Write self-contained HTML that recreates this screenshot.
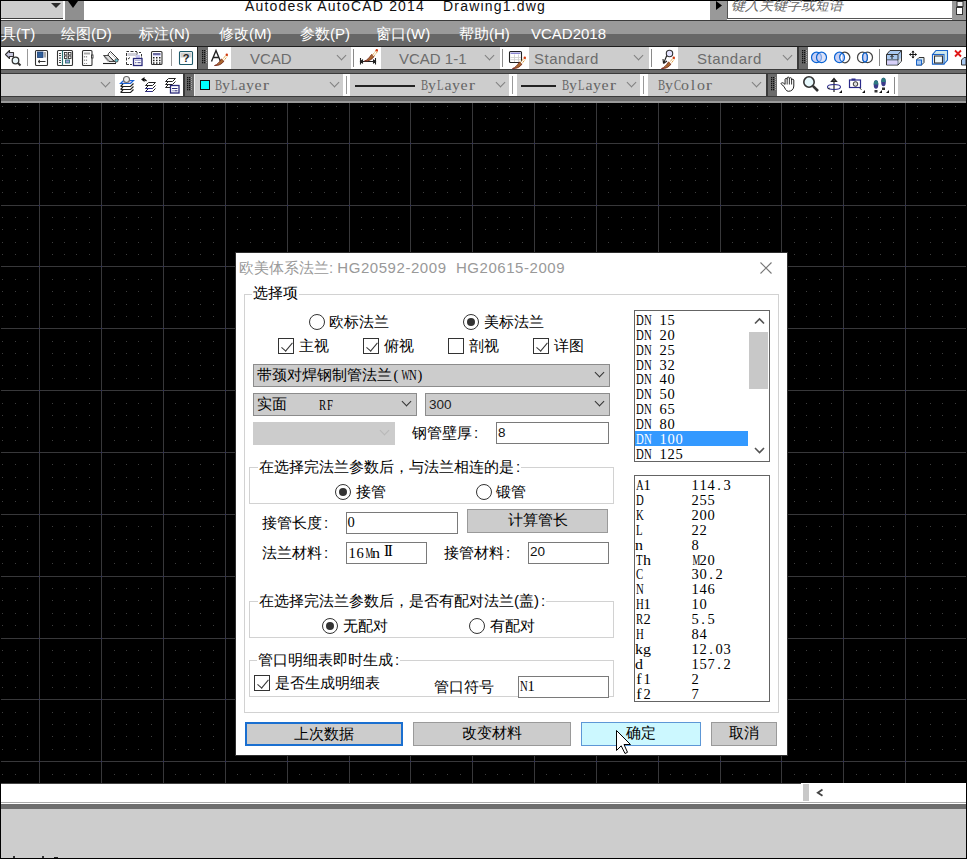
<!DOCTYPE html>
<html><head><meta charset="utf-8">
<style>
*{margin:0;padding:0;box-sizing:border-box}
html,body{width:967px;height:859px;overflow:hidden;background:#000}
body{position:relative;font-family:"Liberation Sans",sans-serif;font-size:15px;color:#000}
.a{position:absolute}
.t{position:absolute;white-space:nowrap;line-height:1}
.mono{font-family:"Liberation Mono",monospace}
.menu{color:#fff;font-size:15px;top:26px}
.cmb{position:absolute;background:#cdcdcd}
.cmbtxt{position:absolute;white-space:nowrap;color:#6c6c6c;font-size:15px;line-height:1}
.chev{position:absolute;width:7px;height:7px;border-right:1px solid #808080;border-bottom:1px solid #808080;transform:rotate(45deg)}
.wt{position:absolute;background:#fff}
.grip{position:absolute;background:#6b6b6b}
.grip i{display:none}
.sep{position:absolute;width:1px;background:#8a8a8a}
.bl{position:absolute;font-family:"Liberation Serif",serif;color:#666;font-size:14.5px;line-height:1;white-space:nowrap}
.c{display:inline-block;width:8px;text-align:center;font-weight:normal}
.w1{transform:scaleX(.74)}
.w2{transform:scaleX(.6)}
.w3{transform:scaleX(1.1)}
.w4{transform:scaleX(1.3)}
.ss{font-family:"Liberation Serif",serif;font-size:14.5px}
/* dialog */
.dlg{position:absolute;left:235px;top:253px;width:552px;height:502px;background:#fff;border-left:1px solid #555}
.grp{position:absolute;border:1px solid #d2d2d2}
.lbl{position:absolute;white-space:nowrap;line-height:1;background:#fff;padding:0 1px}
.radio{position:absolute;width:16px;height:16px;border:1px solid #333;border-radius:50%;background:#fff}
.radio.on::after{content:"";position:absolute;left:3px;top:3px;width:8px;height:8px;border-radius:50%;background:#333}
.chk{position:absolute;width:16px;height:16px;border:1px solid #333;background:#fff}
.chk.on::after{content:"";position:absolute;left:5px;top:1px;width:5px;height:10px;border-right:1.2px solid #333;border-bottom:1.2px solid #333;transform:rotate(40deg)}
.dcmb{position:absolute;background:#cccccc;border:1px solid #8c8c8c}
.tb{position:absolute;background:#fff;border:1px solid #7a7a7a}
.btn{position:absolute;background:#cccccc;border:1px solid #9a9a9a;text-align:center;line-height:20px}
.lst{position:absolute;border:1px solid #646464;background:#fff;overflow:hidden}
.li{position:absolute;left:0px;height:15px;font-family:"Liberation Serif",serif;font-size:14.5px;line-height:14px;white-space:nowrap}
</style></head><body>
<!-- title bar -->
<div class="a" style="left:1px;top:1px;width:965px;height:19px;background:#fff"></div>
<div class="a" style="left:1px;top:20px;width:965px;height:1px;background:#3a3a3a"></div>
<div class="a" style="left:1px;top:1px;width:63px;height:17px;background:#cdcdcd"></div>
<div class="a" style="left:1px;top:18px;width:63px;height:1px;background:#3c3c3c"></div>
<div class="a" style="left:63px;top:1px;width:1px;height:18px;background:#fff"></div>
<div class="a" style="left:65px;top:1px;width:19px;height:19px;background:#8f8f8f"></div>
<svg class="a" style="left:0;top:0" width="90" height="20"><path d="M51 3H61L56 8Z" fill="#2a2a2a"/><path d="M68 1H78L73 8Z" fill="#000"/></svg>
<div class="t" style="left:245px;top:-1px;font-size:14px;letter-spacing:1.2px;color:#111">Autodesk AutoCAD 2014</div><div class="t" style="left:443px;top:-1px;font-size:14px;letter-spacing:1.2px;color:#111">Drawing1.dwg</div>
<div class="a" style="left:710px;top:1px;width:17px;height:19px;background:#999"></div>
<svg class="a" style="left:700px;top:0" width="30" height="20"><path d="M16 1L22 5.5L16 10Z" fill="#000"/></svg>
<div class="a" style="left:727px;top:1px;width:225px;height:18px;background:#fff;border-left:1px solid #555;border-bottom:1px solid #555"></div>
<div class="t" style="left:731px;top:-2px;font-size:14px;color:#666;font-style:italic">键入关键字或短语</div>
<div class="a" style="left:952px;top:1px;width:14px;height:19px;background:#999"></div>
<svg class="a" style="left:950px;top:0" width="17" height="18"><rect x="7" y="1.5" width="6" height="5" fill="#eee" stroke="#333"/><rect x="6.5" y="7.5" width="6" height="7" fill="#fff" stroke="#333"/></svg>
<!-- menu bar -->
<div class="a" style="left:1px;top:21px;width:965px;height:13px;background:#9a9a9a"></div>
<div class="a" style="left:1px;top:34px;width:965px;height:12px;background:#676767"></div>
<div class="a" style="left:1px;top:46px;width:965px;height:1px;background:#1e1e1e"></div>
<div class="t menu" style="left:1px">具(T)</div>
<div class="t menu" style="left:61px">绘图(D)</div>
<div class="t menu" style="left:139px">标注(N)</div>
<div class="t menu" style="left:219px">修改(M)</div>
<div class="t menu" style="left:300px">参数(P)</div>
<div class="t menu" style="left:376px">窗口(W)</div>
<div class="t menu" style="left:459px">帮助(H)</div>
<div class="t menu" style="left:531px">VCAD2018</div>
<!-- toolbars background -->
<div class="a" style="left:1px;top:47px;width:965px;height:56px;background:#6b6b6b"></div>
<div class="a" style="left:1px;top:69px;width:965px;height:1px;background:#3a3a3a"></div>
<div class="a" style="left:1px;top:73px;width:965px;height:1px;background:#3a3a3a"></div>
<div class="a" style="left:1px;top:96px;width:965px;height:1px;background:#3a3a3a"></div>
<div class="a" style="left:1px;top:101px;width:965px;height:2px;background:#9a9a9a"></div>
<!-- row 1 -->
<div class="wt" style="left:1px;top:47px;width:196px;height:22px"></div>
<div class="grip" style="left:200px;top:47px;width:8px;height:22px"><i></i></div>
<div class="wt" style="left:208px;top:47px;width:589px;height:22px"></div>
<div class="cmb" style="left:231px;top:47px;width:120px;height:22px"></div>
<div class="cmbtxt" style="left:250px;top:51px">VCAD</div>
<div class="chev" style="left:337.5px;top:51.5px"></div>
<div class="sep" style="left:353px;top:49px;height:18px"></div>
<div class="cmb" style="left:381px;top:47px;width:119px;height:22px"></div>
<div class="cmbtxt" style="left:399px;top:51px">VCAD 1-1</div>
<div class="chev" style="left:485.5px;top:51.5px"></div>
<div class="sep" style="left:502px;top:49px;height:18px"></div>
<div class="cmb" style="left:529px;top:47px;width:120px;height:22px"></div>
<div class="cmbtxt" style="left:534px;top:51px;letter-spacing:0.5px">Standard</div>
<div class="chev" style="left:634.5px;top:51.5px"></div>
<div class="sep" style="left:651px;top:49px;height:18px"></div>
<div class="cmb" style="left:678px;top:47px;width:119px;height:22px"></div>
<div class="cmbtxt" style="left:697px;top:51px;letter-spacing:0.5px">Standard</div>
<div class="chev" style="left:783.5px;top:51.5px"></div>
<div class="grip" style="left:800px;top:47px;width:8px;height:22px"><i></i></div>
<div class="wt" style="left:808px;top:47px;width:158px;height:22px"></div>
<!-- row 2 -->
<div class="cmb" style="left:1px;top:74px;width:114px;height:22px"></div>
<div class="chev" style="left:101.5px;top:78.5px"></div>
<div class="wt" style="left:115px;top:74px;width:68px;height:22px"></div>
<div class="grip" style="left:186px;top:74px;width:8px;height:22px"><i></i></div>
<div class="cmb" style="left:194px;top:74px;width:149px;height:22px;border-left:1px solid #eee"></div>
<div class="a" style="left:200px;top:80px;width:10px;height:10px;background:#00ffff;border:1px solid #111"></div>
<div class="bl" style="left:214px;top:78px"><b class="c w1">B</b><b class="c w3">y</b><b class="c w1">L</b><b class="c w3">a</b><b class="c w3">y</b><b class="c w3">e</b><b class="c w4">r</b></div>
<div class="chev" style="left:330.5px;top:78.5px"></div>
<div class="a" style="left:343px;top:74px;width:7px;height:22px;background:#fff"></div>
<div class="a" style="left:346px;top:76px;width:1px;height:18px;background:#999"></div>
<div class="cmb" style="left:350px;top:74px;width:159px;height:22px"></div>
<div class="a" style="left:355px;top:85px;width:60px;height:2px;background:#222"></div>
<div class="bl" style="left:420px;top:78px"><b class="c w1">B</b><b class="c w3">y</b><b class="c w1">L</b><b class="c w3">a</b><b class="c w3">y</b><b class="c w3">e</b><b class="c w4">r</b></div>
<div class="chev" style="left:496.5px;top:78.5px"></div>
<div class="a" style="left:509px;top:74px;width:8px;height:22px;background:#fff"></div>
<div class="a" style="left:512px;top:76px;width:1px;height:18px;background:#999"></div>
<div class="cmb" style="left:517px;top:74px;width:123px;height:22px"></div>
<div class="a" style="left:521px;top:85px;width:35px;height:2px;background:#222"></div>
<div class="bl" style="left:561px;top:78px"><b class="c w1">B</b><b class="c w3">y</b><b class="c w1">L</b><b class="c w3">a</b><b class="c w3">y</b><b class="c w3">e</b><b class="c w4">r</b></div>
<div class="chev" style="left:627.5px;top:78.5px"></div>
<div class="a" style="left:640px;top:74px;width:8px;height:22px;background:#fff"></div>
<div class="a" style="left:643px;top:76px;width:1px;height:18px;background:#999"></div>
<div class="cmb" style="left:648px;top:74px;width:118px;height:22px"></div>
<div class="bl" style="left:657px;top:78px"><b class="c w1">B</b><b class="c w3">y</b><b class="c w1">C</b><b class="c w3">o</b><b class="c w3">l</b><b class="c w3">o</b><b class="c w4">r</b></div>
<div class="chev" style="left:752.5px;top:78.5px"></div>
<div class="grip" style="left:769px;top:74px;width:8px;height:22px"><i></i></div>
<div class="wt" style="left:777px;top:74px;width:121px;height:22px"></div>
<div class="sep" style="left:894px;top:77px;height:17px"></div>
<div class="cmb" style="left:898px;top:74px;width:68px;height:22px"></div>
<div class="a" style="left:0;top:0;width:967px;height:859px"><svg class="grid" width="967" height="859" style="position:absolute;left:0;top:0"><path d="M2 106.5h1M15 106.5h1M27 106.5h1M52 106.5h1M64 106.5h1M76 106.5h1M89 106.5h1M114 106.5h1M126 106.5h1M138 106.5h1M151 106.5h1M175 106.5h1M188 106.5h1M200 106.5h1M213 106.5h1M237 106.5h1M250 106.5h1M262 106.5h1M274 106.5h1M299 106.5h1M311 106.5h1M324 106.5h1M336 106.5h1M361 106.5h1M373 106.5h1M386 106.5h1M398 106.5h1M423 106.5h1M435 106.5h1M447 106.5h1M460 106.5h1M485 106.5h1M497 106.5h1M509 106.5h1M522 106.5h1M546 106.5h1M559 106.5h1M571 106.5h1M584 106.5h1M608 106.5h1M621 106.5h1M633 106.5h1M645 106.5h1M670 106.5h1M682 106.5h1M695 106.5h1M707 106.5h1M732 106.5h1M744 106.5h1M757 106.5h1M769 106.5h1M794 106.5h1M806 106.5h1M819 106.5h1M831 106.5h1M856 106.5h1M868 106.5h1M880 106.5h1M893 106.5h1M917 106.5h1M930 106.5h1M942 106.5h1M955 106.5h1M2 118.5h1M15 118.5h1M27 118.5h1M52 118.5h1M64 118.5h1M76 118.5h1M89 118.5h1M114 118.5h1M126 118.5h1M138 118.5h1M151 118.5h1M175 118.5h1M188 118.5h1M200 118.5h1M213 118.5h1M237 118.5h1M250 118.5h1M262 118.5h1M274 118.5h1M299 118.5h1M311 118.5h1M324 118.5h1M336 118.5h1M361 118.5h1M373 118.5h1M386 118.5h1M398 118.5h1M423 118.5h1M435 118.5h1M447 118.5h1M460 118.5h1M485 118.5h1M497 118.5h1M509 118.5h1M522 118.5h1M546 118.5h1M559 118.5h1M571 118.5h1M584 118.5h1M608 118.5h1M621 118.5h1M633 118.5h1M645 118.5h1M670 118.5h1M682 118.5h1M695 118.5h1M707 118.5h1M732 118.5h1M744 118.5h1M757 118.5h1M769 118.5h1M794 118.5h1M806 118.5h1M819 118.5h1M831 118.5h1M856 118.5h1M868 118.5h1M880 118.5h1M893 118.5h1M917 118.5h1M930 118.5h1M942 118.5h1M955 118.5h1M2 130.5h1M15 130.5h1M27 130.5h1M52 130.5h1M64 130.5h1M76 130.5h1M89 130.5h1M114 130.5h1M126 130.5h1M138 130.5h1M151 130.5h1M175 130.5h1M188 130.5h1M200 130.5h1M213 130.5h1M237 130.5h1M250 130.5h1M262 130.5h1M274 130.5h1M299 130.5h1M311 130.5h1M324 130.5h1M336 130.5h1M361 130.5h1M373 130.5h1M386 130.5h1M398 130.5h1M423 130.5h1M435 130.5h1M447 130.5h1M460 130.5h1M485 130.5h1M497 130.5h1M509 130.5h1M522 130.5h1M546 130.5h1M559 130.5h1M571 130.5h1M584 130.5h1M608 130.5h1M621 130.5h1M633 130.5h1M645 130.5h1M670 130.5h1M682 130.5h1M695 130.5h1M707 130.5h1M732 130.5h1M744 130.5h1M757 130.5h1M769 130.5h1M794 130.5h1M806 130.5h1M819 130.5h1M831 130.5h1M856 130.5h1M868 130.5h1M880 130.5h1M893 130.5h1M917 130.5h1M930 130.5h1M942 130.5h1M955 130.5h1M2 155.5h1M15 155.5h1M27 155.5h1M52 155.5h1M64 155.5h1M76 155.5h1M89 155.5h1M114 155.5h1M126 155.5h1M138 155.5h1M151 155.5h1M175 155.5h1M188 155.5h1M200 155.5h1M213 155.5h1M237 155.5h1M250 155.5h1M262 155.5h1M274 155.5h1M299 155.5h1M311 155.5h1M324 155.5h1M336 155.5h1M361 155.5h1M373 155.5h1M386 155.5h1M398 155.5h1M423 155.5h1M435 155.5h1M447 155.5h1M460 155.5h1M485 155.5h1M497 155.5h1M509 155.5h1M522 155.5h1M546 155.5h1M559 155.5h1M571 155.5h1M584 155.5h1M608 155.5h1M621 155.5h1M633 155.5h1M645 155.5h1M670 155.5h1M682 155.5h1M695 155.5h1M707 155.5h1M732 155.5h1M744 155.5h1M757 155.5h1M769 155.5h1M794 155.5h1M806 155.5h1M819 155.5h1M831 155.5h1M856 155.5h1M868 155.5h1M880 155.5h1M893 155.5h1M917 155.5h1M930 155.5h1M942 155.5h1M955 155.5h1M2 168.5h1M15 168.5h1M27 168.5h1M52 168.5h1M64 168.5h1M76 168.5h1M89 168.5h1M114 168.5h1M126 168.5h1M138 168.5h1M151 168.5h1M175 168.5h1M188 168.5h1M200 168.5h1M213 168.5h1M237 168.5h1M250 168.5h1M262 168.5h1M274 168.5h1M299 168.5h1M311 168.5h1M324 168.5h1M336 168.5h1M361 168.5h1M373 168.5h1M386 168.5h1M398 168.5h1M423 168.5h1M435 168.5h1M447 168.5h1M460 168.5h1M485 168.5h1M497 168.5h1M509 168.5h1M522 168.5h1M546 168.5h1M559 168.5h1M571 168.5h1M584 168.5h1M608 168.5h1M621 168.5h1M633 168.5h1M645 168.5h1M670 168.5h1M682 168.5h1M695 168.5h1M707 168.5h1M732 168.5h1M744 168.5h1M757 168.5h1M769 168.5h1M794 168.5h1M806 168.5h1M819 168.5h1M831 168.5h1M856 168.5h1M868 168.5h1M880 168.5h1M893 168.5h1M917 168.5h1M930 168.5h1M942 168.5h1M955 168.5h1M2 180.5h1M15 180.5h1M27 180.5h1M52 180.5h1M64 180.5h1M76 180.5h1M89 180.5h1M114 180.5h1M126 180.5h1M138 180.5h1M151 180.5h1M175 180.5h1M188 180.5h1M200 180.5h1M213 180.5h1M237 180.5h1M250 180.5h1M262 180.5h1M274 180.5h1M299 180.5h1M311 180.5h1M324 180.5h1M336 180.5h1M361 180.5h1M373 180.5h1M386 180.5h1M398 180.5h1M423 180.5h1M435 180.5h1M447 180.5h1M460 180.5h1M485 180.5h1M497 180.5h1M509 180.5h1M522 180.5h1M546 180.5h1M559 180.5h1M571 180.5h1M584 180.5h1M608 180.5h1M621 180.5h1M633 180.5h1M645 180.5h1M670 180.5h1M682 180.5h1M695 180.5h1M707 180.5h1M732 180.5h1M744 180.5h1M757 180.5h1M769 180.5h1M794 180.5h1M806 180.5h1M819 180.5h1M831 180.5h1M856 180.5h1M868 180.5h1M880 180.5h1M893 180.5h1M917 180.5h1M930 180.5h1M942 180.5h1M955 180.5h1M2 192.5h1M15 192.5h1M27 192.5h1M52 192.5h1M64 192.5h1M76 192.5h1M89 192.5h1M114 192.5h1M126 192.5h1M138 192.5h1M151 192.5h1M175 192.5h1M188 192.5h1M200 192.5h1M213 192.5h1M237 192.5h1M250 192.5h1M262 192.5h1M274 192.5h1M299 192.5h1M311 192.5h1M324 192.5h1M336 192.5h1M361 192.5h1M373 192.5h1M386 192.5h1M398 192.5h1M423 192.5h1M435 192.5h1M447 192.5h1M460 192.5h1M485 192.5h1M497 192.5h1M509 192.5h1M522 192.5h1M546 192.5h1M559 192.5h1M571 192.5h1M584 192.5h1M608 192.5h1M621 192.5h1M633 192.5h1M645 192.5h1M670 192.5h1M682 192.5h1M695 192.5h1M707 192.5h1M732 192.5h1M744 192.5h1M757 192.5h1M769 192.5h1M794 192.5h1M806 192.5h1M819 192.5h1M831 192.5h1M856 192.5h1M868 192.5h1M880 192.5h1M893 192.5h1M917 192.5h1M930 192.5h1M942 192.5h1M955 192.5h1M2 217.5h1M15 217.5h1M27 217.5h1M52 217.5h1M64 217.5h1M76 217.5h1M89 217.5h1M114 217.5h1M126 217.5h1M138 217.5h1M151 217.5h1M175 217.5h1M188 217.5h1M200 217.5h1M213 217.5h1M237 217.5h1M250 217.5h1M262 217.5h1M274 217.5h1M299 217.5h1M311 217.5h1M324 217.5h1M336 217.5h1M361 217.5h1M373 217.5h1M386 217.5h1M398 217.5h1M423 217.5h1M435 217.5h1M447 217.5h1M460 217.5h1M485 217.5h1M497 217.5h1M509 217.5h1M522 217.5h1M546 217.5h1M559 217.5h1M571 217.5h1M584 217.5h1M608 217.5h1M621 217.5h1M633 217.5h1M645 217.5h1M670 217.5h1M682 217.5h1M695 217.5h1M707 217.5h1M732 217.5h1M744 217.5h1M757 217.5h1M769 217.5h1M794 217.5h1M806 217.5h1M819 217.5h1M831 217.5h1M856 217.5h1M868 217.5h1M880 217.5h1M893 217.5h1M917 217.5h1M930 217.5h1M942 217.5h1M955 217.5h1M2 229.5h1M15 229.5h1M27 229.5h1M52 229.5h1M64 229.5h1M76 229.5h1M89 229.5h1M114 229.5h1M126 229.5h1M138 229.5h1M151 229.5h1M175 229.5h1M188 229.5h1M200 229.5h1M213 229.5h1M237 229.5h1M250 229.5h1M262 229.5h1M274 229.5h1M299 229.5h1M311 229.5h1M324 229.5h1M336 229.5h1M361 229.5h1M373 229.5h1M386 229.5h1M398 229.5h1M423 229.5h1M435 229.5h1M447 229.5h1M460 229.5h1M485 229.5h1M497 229.5h1M509 229.5h1M522 229.5h1M546 229.5h1M559 229.5h1M571 229.5h1M584 229.5h1M608 229.5h1M621 229.5h1M633 229.5h1M645 229.5h1M670 229.5h1M682 229.5h1M695 229.5h1M707 229.5h1M732 229.5h1M744 229.5h1M757 229.5h1M769 229.5h1M794 229.5h1M806 229.5h1M819 229.5h1M831 229.5h1M856 229.5h1M868 229.5h1M880 229.5h1M893 229.5h1M917 229.5h1M930 229.5h1M942 229.5h1M955 229.5h1M2 242.5h1M15 242.5h1M27 242.5h1M52 242.5h1M64 242.5h1M76 242.5h1M89 242.5h1M114 242.5h1M126 242.5h1M138 242.5h1M151 242.5h1M175 242.5h1M188 242.5h1M200 242.5h1M213 242.5h1M237 242.5h1M250 242.5h1M262 242.5h1M274 242.5h1M299 242.5h1M311 242.5h1M324 242.5h1M336 242.5h1M361 242.5h1M373 242.5h1M386 242.5h1M398 242.5h1M423 242.5h1M435 242.5h1M447 242.5h1M460 242.5h1M485 242.5h1M497 242.5h1M509 242.5h1M522 242.5h1M546 242.5h1M559 242.5h1M571 242.5h1M584 242.5h1M608 242.5h1M621 242.5h1M633 242.5h1M645 242.5h1M670 242.5h1M682 242.5h1M695 242.5h1M707 242.5h1M732 242.5h1M744 242.5h1M757 242.5h1M769 242.5h1M794 242.5h1M806 242.5h1M819 242.5h1M831 242.5h1M856 242.5h1M868 242.5h1M880 242.5h1M893 242.5h1M917 242.5h1M930 242.5h1M942 242.5h1M955 242.5h1M2 254.5h1M15 254.5h1M27 254.5h1M52 254.5h1M64 254.5h1M76 254.5h1M89 254.5h1M114 254.5h1M126 254.5h1M138 254.5h1M151 254.5h1M175 254.5h1M188 254.5h1M200 254.5h1M213 254.5h1M237 254.5h1M250 254.5h1M262 254.5h1M274 254.5h1M299 254.5h1M311 254.5h1M324 254.5h1M336 254.5h1M361 254.5h1M373 254.5h1M386 254.5h1M398 254.5h1M423 254.5h1M435 254.5h1M447 254.5h1M460 254.5h1M485 254.5h1M497 254.5h1M509 254.5h1M522 254.5h1M546 254.5h1M559 254.5h1M571 254.5h1M584 254.5h1M608 254.5h1M621 254.5h1M633 254.5h1M645 254.5h1M670 254.5h1M682 254.5h1M695 254.5h1M707 254.5h1M732 254.5h1M744 254.5h1M757 254.5h1M769 254.5h1M794 254.5h1M806 254.5h1M819 254.5h1M831 254.5h1M856 254.5h1M868 254.5h1M880 254.5h1M893 254.5h1M917 254.5h1M930 254.5h1M942 254.5h1M955 254.5h1M2 279.5h1M15 279.5h1M27 279.5h1M52 279.5h1M64 279.5h1M76 279.5h1M89 279.5h1M114 279.5h1M126 279.5h1M138 279.5h1M151 279.5h1M175 279.5h1M188 279.5h1M200 279.5h1M213 279.5h1M237 279.5h1M250 279.5h1M262 279.5h1M274 279.5h1M299 279.5h1M311 279.5h1M324 279.5h1M336 279.5h1M361 279.5h1M373 279.5h1M386 279.5h1M398 279.5h1M423 279.5h1M435 279.5h1M447 279.5h1M460 279.5h1M485 279.5h1M497 279.5h1M509 279.5h1M522 279.5h1M546 279.5h1M559 279.5h1M571 279.5h1M584 279.5h1M608 279.5h1M621 279.5h1M633 279.5h1M645 279.5h1M670 279.5h1M682 279.5h1M695 279.5h1M707 279.5h1M732 279.5h1M744 279.5h1M757 279.5h1M769 279.5h1M794 279.5h1M806 279.5h1M819 279.5h1M831 279.5h1M856 279.5h1M868 279.5h1M880 279.5h1M893 279.5h1M917 279.5h1M930 279.5h1M942 279.5h1M955 279.5h1M2 291.5h1M15 291.5h1M27 291.5h1M52 291.5h1M64 291.5h1M76 291.5h1M89 291.5h1M114 291.5h1M126 291.5h1M138 291.5h1M151 291.5h1M175 291.5h1M188 291.5h1M200 291.5h1M213 291.5h1M237 291.5h1M250 291.5h1M262 291.5h1M274 291.5h1M299 291.5h1M311 291.5h1M324 291.5h1M336 291.5h1M361 291.5h1M373 291.5h1M386 291.5h1M398 291.5h1M423 291.5h1M435 291.5h1M447 291.5h1M460 291.5h1M485 291.5h1M497 291.5h1M509 291.5h1M522 291.5h1M546 291.5h1M559 291.5h1M571 291.5h1M584 291.5h1M608 291.5h1M621 291.5h1M633 291.5h1M645 291.5h1M670 291.5h1M682 291.5h1M695 291.5h1M707 291.5h1M732 291.5h1M744 291.5h1M757 291.5h1M769 291.5h1M794 291.5h1M806 291.5h1M819 291.5h1M831 291.5h1M856 291.5h1M868 291.5h1M880 291.5h1M893 291.5h1M917 291.5h1M930 291.5h1M942 291.5h1M955 291.5h1M2 304.5h1M15 304.5h1M27 304.5h1M52 304.5h1M64 304.5h1M76 304.5h1M89 304.5h1M114 304.5h1M126 304.5h1M138 304.5h1M151 304.5h1M175 304.5h1M188 304.5h1M200 304.5h1M213 304.5h1M237 304.5h1M250 304.5h1M262 304.5h1M274 304.5h1M299 304.5h1M311 304.5h1M324 304.5h1M336 304.5h1M361 304.5h1M373 304.5h1M386 304.5h1M398 304.5h1M423 304.5h1M435 304.5h1M447 304.5h1M460 304.5h1M485 304.5h1M497 304.5h1M509 304.5h1M522 304.5h1M546 304.5h1M559 304.5h1M571 304.5h1M584 304.5h1M608 304.5h1M621 304.5h1M633 304.5h1M645 304.5h1M670 304.5h1M682 304.5h1M695 304.5h1M707 304.5h1M732 304.5h1M744 304.5h1M757 304.5h1M769 304.5h1M794 304.5h1M806 304.5h1M819 304.5h1M831 304.5h1M856 304.5h1M868 304.5h1M880 304.5h1M893 304.5h1M917 304.5h1M930 304.5h1M942 304.5h1M955 304.5h1M2 316.5h1M15 316.5h1M27 316.5h1M52 316.5h1M64 316.5h1M76 316.5h1M89 316.5h1M114 316.5h1M126 316.5h1M138 316.5h1M151 316.5h1M175 316.5h1M188 316.5h1M200 316.5h1M213 316.5h1M237 316.5h1M250 316.5h1M262 316.5h1M274 316.5h1M299 316.5h1M311 316.5h1M324 316.5h1M336 316.5h1M361 316.5h1M373 316.5h1M386 316.5h1M398 316.5h1M423 316.5h1M435 316.5h1M447 316.5h1M460 316.5h1M485 316.5h1M497 316.5h1M509 316.5h1M522 316.5h1M546 316.5h1M559 316.5h1M571 316.5h1M584 316.5h1M608 316.5h1M621 316.5h1M633 316.5h1M645 316.5h1M670 316.5h1M682 316.5h1M695 316.5h1M707 316.5h1M732 316.5h1M744 316.5h1M757 316.5h1M769 316.5h1M794 316.5h1M806 316.5h1M819 316.5h1M831 316.5h1M856 316.5h1M868 316.5h1M880 316.5h1M893 316.5h1M917 316.5h1M930 316.5h1M942 316.5h1M955 316.5h1M2 341.5h1M15 341.5h1M27 341.5h1M52 341.5h1M64 341.5h1M76 341.5h1M89 341.5h1M114 341.5h1M126 341.5h1M138 341.5h1M151 341.5h1M175 341.5h1M188 341.5h1M200 341.5h1M213 341.5h1M237 341.5h1M250 341.5h1M262 341.5h1M274 341.5h1M299 341.5h1M311 341.5h1M324 341.5h1M336 341.5h1M361 341.5h1M373 341.5h1M386 341.5h1M398 341.5h1M423 341.5h1M435 341.5h1M447 341.5h1M460 341.5h1M485 341.5h1M497 341.5h1M509 341.5h1M522 341.5h1M546 341.5h1M559 341.5h1M571 341.5h1M584 341.5h1M608 341.5h1M621 341.5h1M633 341.5h1M645 341.5h1M670 341.5h1M682 341.5h1M695 341.5h1M707 341.5h1M732 341.5h1M744 341.5h1M757 341.5h1M769 341.5h1M794 341.5h1M806 341.5h1M819 341.5h1M831 341.5h1M856 341.5h1M868 341.5h1M880 341.5h1M893 341.5h1M917 341.5h1M930 341.5h1M942 341.5h1M955 341.5h1M2 353.5h1M15 353.5h1M27 353.5h1M52 353.5h1M64 353.5h1M76 353.5h1M89 353.5h1M114 353.5h1M126 353.5h1M138 353.5h1M151 353.5h1M175 353.5h1M188 353.5h1M200 353.5h1M213 353.5h1M237 353.5h1M250 353.5h1M262 353.5h1M274 353.5h1M299 353.5h1M311 353.5h1M324 353.5h1M336 353.5h1M361 353.5h1M373 353.5h1M386 353.5h1M398 353.5h1M423 353.5h1M435 353.5h1M447 353.5h1M460 353.5h1M485 353.5h1M497 353.5h1M509 353.5h1M522 353.5h1M546 353.5h1M559 353.5h1M571 353.5h1M584 353.5h1M608 353.5h1M621 353.5h1M633 353.5h1M645 353.5h1M670 353.5h1M682 353.5h1M695 353.5h1M707 353.5h1M732 353.5h1M744 353.5h1M757 353.5h1M769 353.5h1M794 353.5h1M806 353.5h1M819 353.5h1M831 353.5h1M856 353.5h1M868 353.5h1M880 353.5h1M893 353.5h1M917 353.5h1M930 353.5h1M942 353.5h1M955 353.5h1M2 365.5h1M15 365.5h1M27 365.5h1M52 365.5h1M64 365.5h1M76 365.5h1M89 365.5h1M114 365.5h1M126 365.5h1M138 365.5h1M151 365.5h1M175 365.5h1M188 365.5h1M200 365.5h1M213 365.5h1M237 365.5h1M250 365.5h1M262 365.5h1M274 365.5h1M299 365.5h1M311 365.5h1M324 365.5h1M336 365.5h1M361 365.5h1M373 365.5h1M386 365.5h1M398 365.5h1M423 365.5h1M435 365.5h1M447 365.5h1M460 365.5h1M485 365.5h1M497 365.5h1M509 365.5h1M522 365.5h1M546 365.5h1M559 365.5h1M571 365.5h1M584 365.5h1M608 365.5h1M621 365.5h1M633 365.5h1M645 365.5h1M670 365.5h1M682 365.5h1M695 365.5h1M707 365.5h1M732 365.5h1M744 365.5h1M757 365.5h1M769 365.5h1M794 365.5h1M806 365.5h1M819 365.5h1M831 365.5h1M856 365.5h1M868 365.5h1M880 365.5h1M893 365.5h1M917 365.5h1M930 365.5h1M942 365.5h1M955 365.5h1M2 378.5h1M15 378.5h1M27 378.5h1M52 378.5h1M64 378.5h1M76 378.5h1M89 378.5h1M114 378.5h1M126 378.5h1M138 378.5h1M151 378.5h1M175 378.5h1M188 378.5h1M200 378.5h1M213 378.5h1M237 378.5h1M250 378.5h1M262 378.5h1M274 378.5h1M299 378.5h1M311 378.5h1M324 378.5h1M336 378.5h1M361 378.5h1M373 378.5h1M386 378.5h1M398 378.5h1M423 378.5h1M435 378.5h1M447 378.5h1M460 378.5h1M485 378.5h1M497 378.5h1M509 378.5h1M522 378.5h1M546 378.5h1M559 378.5h1M571 378.5h1M584 378.5h1M608 378.5h1M621 378.5h1M633 378.5h1M645 378.5h1M670 378.5h1M682 378.5h1M695 378.5h1M707 378.5h1M732 378.5h1M744 378.5h1M757 378.5h1M769 378.5h1M794 378.5h1M806 378.5h1M819 378.5h1M831 378.5h1M856 378.5h1M868 378.5h1M880 378.5h1M893 378.5h1M917 378.5h1M930 378.5h1M942 378.5h1M955 378.5h1M2 403.5h1M15 403.5h1M27 403.5h1M52 403.5h1M64 403.5h1M76 403.5h1M89 403.5h1M114 403.5h1M126 403.5h1M138 403.5h1M151 403.5h1M175 403.5h1M188 403.5h1M200 403.5h1M213 403.5h1M237 403.5h1M250 403.5h1M262 403.5h1M274 403.5h1M299 403.5h1M311 403.5h1M324 403.5h1M336 403.5h1M361 403.5h1M373 403.5h1M386 403.5h1M398 403.5h1M423 403.5h1M435 403.5h1M447 403.5h1M460 403.5h1M485 403.5h1M497 403.5h1M509 403.5h1M522 403.5h1M546 403.5h1M559 403.5h1M571 403.5h1M584 403.5h1M608 403.5h1M621 403.5h1M633 403.5h1M645 403.5h1M670 403.5h1M682 403.5h1M695 403.5h1M707 403.5h1M732 403.5h1M744 403.5h1M757 403.5h1M769 403.5h1M794 403.5h1M806 403.5h1M819 403.5h1M831 403.5h1M856 403.5h1M868 403.5h1M880 403.5h1M893 403.5h1M917 403.5h1M930 403.5h1M942 403.5h1M955 403.5h1M2 415.5h1M15 415.5h1M27 415.5h1M52 415.5h1M64 415.5h1M76 415.5h1M89 415.5h1M114 415.5h1M126 415.5h1M138 415.5h1M151 415.5h1M175 415.5h1M188 415.5h1M200 415.5h1M213 415.5h1M237 415.5h1M250 415.5h1M262 415.5h1M274 415.5h1M299 415.5h1M311 415.5h1M324 415.5h1M336 415.5h1M361 415.5h1M373 415.5h1M386 415.5h1M398 415.5h1M423 415.5h1M435 415.5h1M447 415.5h1M460 415.5h1M485 415.5h1M497 415.5h1M509 415.5h1M522 415.5h1M546 415.5h1M559 415.5h1M571 415.5h1M584 415.5h1M608 415.5h1M621 415.5h1M633 415.5h1M645 415.5h1M670 415.5h1M682 415.5h1M695 415.5h1M707 415.5h1M732 415.5h1M744 415.5h1M757 415.5h1M769 415.5h1M794 415.5h1M806 415.5h1M819 415.5h1M831 415.5h1M856 415.5h1M868 415.5h1M880 415.5h1M893 415.5h1M917 415.5h1M930 415.5h1M942 415.5h1M955 415.5h1M2 427.5h1M15 427.5h1M27 427.5h1M52 427.5h1M64 427.5h1M76 427.5h1M89 427.5h1M114 427.5h1M126 427.5h1M138 427.5h1M151 427.5h1M175 427.5h1M188 427.5h1M200 427.5h1M213 427.5h1M237 427.5h1M250 427.5h1M262 427.5h1M274 427.5h1M299 427.5h1M311 427.5h1M324 427.5h1M336 427.5h1M361 427.5h1M373 427.5h1M386 427.5h1M398 427.5h1M423 427.5h1M435 427.5h1M447 427.5h1M460 427.5h1M485 427.5h1M497 427.5h1M509 427.5h1M522 427.5h1M546 427.5h1M559 427.5h1M571 427.5h1M584 427.5h1M608 427.5h1M621 427.5h1M633 427.5h1M645 427.5h1M670 427.5h1M682 427.5h1M695 427.5h1M707 427.5h1M732 427.5h1M744 427.5h1M757 427.5h1M769 427.5h1M794 427.5h1M806 427.5h1M819 427.5h1M831 427.5h1M856 427.5h1M868 427.5h1M880 427.5h1M893 427.5h1M917 427.5h1M930 427.5h1M942 427.5h1M955 427.5h1M2 440.5h1M15 440.5h1M27 440.5h1M52 440.5h1M64 440.5h1M76 440.5h1M89 440.5h1M114 440.5h1M126 440.5h1M138 440.5h1M151 440.5h1M175 440.5h1M188 440.5h1M200 440.5h1M213 440.5h1M237 440.5h1M250 440.5h1M262 440.5h1M274 440.5h1M299 440.5h1M311 440.5h1M324 440.5h1M336 440.5h1M361 440.5h1M373 440.5h1M386 440.5h1M398 440.5h1M423 440.5h1M435 440.5h1M447 440.5h1M460 440.5h1M485 440.5h1M497 440.5h1M509 440.5h1M522 440.5h1M546 440.5h1M559 440.5h1M571 440.5h1M584 440.5h1M608 440.5h1M621 440.5h1M633 440.5h1M645 440.5h1M670 440.5h1M682 440.5h1M695 440.5h1M707 440.5h1M732 440.5h1M744 440.5h1M757 440.5h1M769 440.5h1M794 440.5h1M806 440.5h1M819 440.5h1M831 440.5h1M856 440.5h1M868 440.5h1M880 440.5h1M893 440.5h1M917 440.5h1M930 440.5h1M942 440.5h1M955 440.5h1M2 464.5h1M15 464.5h1M27 464.5h1M52 464.5h1M64 464.5h1M76 464.5h1M89 464.5h1M114 464.5h1M126 464.5h1M138 464.5h1M151 464.5h1M175 464.5h1M188 464.5h1M200 464.5h1M213 464.5h1M237 464.5h1M250 464.5h1M262 464.5h1M274 464.5h1M299 464.5h1M311 464.5h1M324 464.5h1M336 464.5h1M361 464.5h1M373 464.5h1M386 464.5h1M398 464.5h1M423 464.5h1M435 464.5h1M447 464.5h1M460 464.5h1M485 464.5h1M497 464.5h1M509 464.5h1M522 464.5h1M546 464.5h1M559 464.5h1M571 464.5h1M584 464.5h1M608 464.5h1M621 464.5h1M633 464.5h1M645 464.5h1M670 464.5h1M682 464.5h1M695 464.5h1M707 464.5h1M732 464.5h1M744 464.5h1M757 464.5h1M769 464.5h1M794 464.5h1M806 464.5h1M819 464.5h1M831 464.5h1M856 464.5h1M868 464.5h1M880 464.5h1M893 464.5h1M917 464.5h1M930 464.5h1M942 464.5h1M955 464.5h1M2 477.5h1M15 477.5h1M27 477.5h1M52 477.5h1M64 477.5h1M76 477.5h1M89 477.5h1M114 477.5h1M126 477.5h1M138 477.5h1M151 477.5h1M175 477.5h1M188 477.5h1M200 477.5h1M213 477.5h1M237 477.5h1M250 477.5h1M262 477.5h1M274 477.5h1M299 477.5h1M311 477.5h1M324 477.5h1M336 477.5h1M361 477.5h1M373 477.5h1M386 477.5h1M398 477.5h1M423 477.5h1M435 477.5h1M447 477.5h1M460 477.5h1M485 477.5h1M497 477.5h1M509 477.5h1M522 477.5h1M546 477.5h1M559 477.5h1M571 477.5h1M584 477.5h1M608 477.5h1M621 477.5h1M633 477.5h1M645 477.5h1M670 477.5h1M682 477.5h1M695 477.5h1M707 477.5h1M732 477.5h1M744 477.5h1M757 477.5h1M769 477.5h1M794 477.5h1M806 477.5h1M819 477.5h1M831 477.5h1M856 477.5h1M868 477.5h1M880 477.5h1M893 477.5h1M917 477.5h1M930 477.5h1M942 477.5h1M955 477.5h1M2 489.5h1M15 489.5h1M27 489.5h1M52 489.5h1M64 489.5h1M76 489.5h1M89 489.5h1M114 489.5h1M126 489.5h1M138 489.5h1M151 489.5h1M175 489.5h1M188 489.5h1M200 489.5h1M213 489.5h1M237 489.5h1M250 489.5h1M262 489.5h1M274 489.5h1M299 489.5h1M311 489.5h1M324 489.5h1M336 489.5h1M361 489.5h1M373 489.5h1M386 489.5h1M398 489.5h1M423 489.5h1M435 489.5h1M447 489.5h1M460 489.5h1M485 489.5h1M497 489.5h1M509 489.5h1M522 489.5h1M546 489.5h1M559 489.5h1M571 489.5h1M584 489.5h1M608 489.5h1M621 489.5h1M633 489.5h1M645 489.5h1M670 489.5h1M682 489.5h1M695 489.5h1M707 489.5h1M732 489.5h1M744 489.5h1M757 489.5h1M769 489.5h1M794 489.5h1M806 489.5h1M819 489.5h1M831 489.5h1M856 489.5h1M868 489.5h1M880 489.5h1M893 489.5h1M917 489.5h1M930 489.5h1M942 489.5h1M955 489.5h1M2 501.5h1M15 501.5h1M27 501.5h1M52 501.5h1M64 501.5h1M76 501.5h1M89 501.5h1M114 501.5h1M126 501.5h1M138 501.5h1M151 501.5h1M175 501.5h1M188 501.5h1M200 501.5h1M213 501.5h1M237 501.5h1M250 501.5h1M262 501.5h1M274 501.5h1M299 501.5h1M311 501.5h1M324 501.5h1M336 501.5h1M361 501.5h1M373 501.5h1M386 501.5h1M398 501.5h1M423 501.5h1M435 501.5h1M447 501.5h1M460 501.5h1M485 501.5h1M497 501.5h1M509 501.5h1M522 501.5h1M546 501.5h1M559 501.5h1M571 501.5h1M584 501.5h1M608 501.5h1M621 501.5h1M633 501.5h1M645 501.5h1M670 501.5h1M682 501.5h1M695 501.5h1M707 501.5h1M732 501.5h1M744 501.5h1M757 501.5h1M769 501.5h1M794 501.5h1M806 501.5h1M819 501.5h1M831 501.5h1M856 501.5h1M868 501.5h1M880 501.5h1M893 501.5h1M917 501.5h1M930 501.5h1M942 501.5h1M955 501.5h1M2 526.5h1M15 526.5h1M27 526.5h1M52 526.5h1M64 526.5h1M76 526.5h1M89 526.5h1M114 526.5h1M126 526.5h1M138 526.5h1M151 526.5h1M175 526.5h1M188 526.5h1M200 526.5h1M213 526.5h1M237 526.5h1M250 526.5h1M262 526.5h1M274 526.5h1M299 526.5h1M311 526.5h1M324 526.5h1M336 526.5h1M361 526.5h1M373 526.5h1M386 526.5h1M398 526.5h1M423 526.5h1M435 526.5h1M447 526.5h1M460 526.5h1M485 526.5h1M497 526.5h1M509 526.5h1M522 526.5h1M546 526.5h1M559 526.5h1M571 526.5h1M584 526.5h1M608 526.5h1M621 526.5h1M633 526.5h1M645 526.5h1M670 526.5h1M682 526.5h1M695 526.5h1M707 526.5h1M732 526.5h1M744 526.5h1M757 526.5h1M769 526.5h1M794 526.5h1M806 526.5h1M819 526.5h1M831 526.5h1M856 526.5h1M868 526.5h1M880 526.5h1M893 526.5h1M917 526.5h1M930 526.5h1M942 526.5h1M955 526.5h1M2 539.5h1M15 539.5h1M27 539.5h1M52 539.5h1M64 539.5h1M76 539.5h1M89 539.5h1M114 539.5h1M126 539.5h1M138 539.5h1M151 539.5h1M175 539.5h1M188 539.5h1M200 539.5h1M213 539.5h1M237 539.5h1M250 539.5h1M262 539.5h1M274 539.5h1M299 539.5h1M311 539.5h1M324 539.5h1M336 539.5h1M361 539.5h1M373 539.5h1M386 539.5h1M398 539.5h1M423 539.5h1M435 539.5h1M447 539.5h1M460 539.5h1M485 539.5h1M497 539.5h1M509 539.5h1M522 539.5h1M546 539.5h1M559 539.5h1M571 539.5h1M584 539.5h1M608 539.5h1M621 539.5h1M633 539.5h1M645 539.5h1M670 539.5h1M682 539.5h1M695 539.5h1M707 539.5h1M732 539.5h1M744 539.5h1M757 539.5h1M769 539.5h1M794 539.5h1M806 539.5h1M819 539.5h1M831 539.5h1M856 539.5h1M868 539.5h1M880 539.5h1M893 539.5h1M917 539.5h1M930 539.5h1M942 539.5h1M955 539.5h1M2 551.5h1M15 551.5h1M27 551.5h1M52 551.5h1M64 551.5h1M76 551.5h1M89 551.5h1M114 551.5h1M126 551.5h1M138 551.5h1M151 551.5h1M175 551.5h1M188 551.5h1M200 551.5h1M213 551.5h1M237 551.5h1M250 551.5h1M262 551.5h1M274 551.5h1M299 551.5h1M311 551.5h1M324 551.5h1M336 551.5h1M361 551.5h1M373 551.5h1M386 551.5h1M398 551.5h1M423 551.5h1M435 551.5h1M447 551.5h1M460 551.5h1M485 551.5h1M497 551.5h1M509 551.5h1M522 551.5h1M546 551.5h1M559 551.5h1M571 551.5h1M584 551.5h1M608 551.5h1M621 551.5h1M633 551.5h1M645 551.5h1M670 551.5h1M682 551.5h1M695 551.5h1M707 551.5h1M732 551.5h1M744 551.5h1M757 551.5h1M769 551.5h1M794 551.5h1M806 551.5h1M819 551.5h1M831 551.5h1M856 551.5h1M868 551.5h1M880 551.5h1M893 551.5h1M917 551.5h1M930 551.5h1M942 551.5h1M955 551.5h1M2 563.5h1M15 563.5h1M27 563.5h1M52 563.5h1M64 563.5h1M76 563.5h1M89 563.5h1M114 563.5h1M126 563.5h1M138 563.5h1M151 563.5h1M175 563.5h1M188 563.5h1M200 563.5h1M213 563.5h1M237 563.5h1M250 563.5h1M262 563.5h1M274 563.5h1M299 563.5h1M311 563.5h1M324 563.5h1M336 563.5h1M361 563.5h1M373 563.5h1M386 563.5h1M398 563.5h1M423 563.5h1M435 563.5h1M447 563.5h1M460 563.5h1M485 563.5h1M497 563.5h1M509 563.5h1M522 563.5h1M546 563.5h1M559 563.5h1M571 563.5h1M584 563.5h1M608 563.5h1M621 563.5h1M633 563.5h1M645 563.5h1M670 563.5h1M682 563.5h1M695 563.5h1M707 563.5h1M732 563.5h1M744 563.5h1M757 563.5h1M769 563.5h1M794 563.5h1M806 563.5h1M819 563.5h1M831 563.5h1M856 563.5h1M868 563.5h1M880 563.5h1M893 563.5h1M917 563.5h1M930 563.5h1M942 563.5h1M955 563.5h1M2 588.5h1M15 588.5h1M27 588.5h1M52 588.5h1M64 588.5h1M76 588.5h1M89 588.5h1M114 588.5h1M126 588.5h1M138 588.5h1M151 588.5h1M175 588.5h1M188 588.5h1M200 588.5h1M213 588.5h1M237 588.5h1M250 588.5h1M262 588.5h1M274 588.5h1M299 588.5h1M311 588.5h1M324 588.5h1M336 588.5h1M361 588.5h1M373 588.5h1M386 588.5h1M398 588.5h1M423 588.5h1M435 588.5h1M447 588.5h1M460 588.5h1M485 588.5h1M497 588.5h1M509 588.5h1M522 588.5h1M546 588.5h1M559 588.5h1M571 588.5h1M584 588.5h1M608 588.5h1M621 588.5h1M633 588.5h1M645 588.5h1M670 588.5h1M682 588.5h1M695 588.5h1M707 588.5h1M732 588.5h1M744 588.5h1M757 588.5h1M769 588.5h1M794 588.5h1M806 588.5h1M819 588.5h1M831 588.5h1M856 588.5h1M868 588.5h1M880 588.5h1M893 588.5h1M917 588.5h1M930 588.5h1M942 588.5h1M955 588.5h1M2 600.5h1M15 600.5h1M27 600.5h1M52 600.5h1M64 600.5h1M76 600.5h1M89 600.5h1M114 600.5h1M126 600.5h1M138 600.5h1M151 600.5h1M175 600.5h1M188 600.5h1M200 600.5h1M213 600.5h1M237 600.5h1M250 600.5h1M262 600.5h1M274 600.5h1M299 600.5h1M311 600.5h1M324 600.5h1M336 600.5h1M361 600.5h1M373 600.5h1M386 600.5h1M398 600.5h1M423 600.5h1M435 600.5h1M447 600.5h1M460 600.5h1M485 600.5h1M497 600.5h1M509 600.5h1M522 600.5h1M546 600.5h1M559 600.5h1M571 600.5h1M584 600.5h1M608 600.5h1M621 600.5h1M633 600.5h1M645 600.5h1M670 600.5h1M682 600.5h1M695 600.5h1M707 600.5h1M732 600.5h1M744 600.5h1M757 600.5h1M769 600.5h1M794 600.5h1M806 600.5h1M819 600.5h1M831 600.5h1M856 600.5h1M868 600.5h1M880 600.5h1M893 600.5h1M917 600.5h1M930 600.5h1M942 600.5h1M955 600.5h1M2 613.5h1M15 613.5h1M27 613.5h1M52 613.5h1M64 613.5h1M76 613.5h1M89 613.5h1M114 613.5h1M126 613.5h1M138 613.5h1M151 613.5h1M175 613.5h1M188 613.5h1M200 613.5h1M213 613.5h1M237 613.5h1M250 613.5h1M262 613.5h1M274 613.5h1M299 613.5h1M311 613.5h1M324 613.5h1M336 613.5h1M361 613.5h1M373 613.5h1M386 613.5h1M398 613.5h1M423 613.5h1M435 613.5h1M447 613.5h1M460 613.5h1M485 613.5h1M497 613.5h1M509 613.5h1M522 613.5h1M546 613.5h1M559 613.5h1M571 613.5h1M584 613.5h1M608 613.5h1M621 613.5h1M633 613.5h1M645 613.5h1M670 613.5h1M682 613.5h1M695 613.5h1M707 613.5h1M732 613.5h1M744 613.5h1M757 613.5h1M769 613.5h1M794 613.5h1M806 613.5h1M819 613.5h1M831 613.5h1M856 613.5h1M868 613.5h1M880 613.5h1M893 613.5h1M917 613.5h1M930 613.5h1M942 613.5h1M955 613.5h1M2 625.5h1M15 625.5h1M27 625.5h1M52 625.5h1M64 625.5h1M76 625.5h1M89 625.5h1M114 625.5h1M126 625.5h1M138 625.5h1M151 625.5h1M175 625.5h1M188 625.5h1M200 625.5h1M213 625.5h1M237 625.5h1M250 625.5h1M262 625.5h1M274 625.5h1M299 625.5h1M311 625.5h1M324 625.5h1M336 625.5h1M361 625.5h1M373 625.5h1M386 625.5h1M398 625.5h1M423 625.5h1M435 625.5h1M447 625.5h1M460 625.5h1M485 625.5h1M497 625.5h1M509 625.5h1M522 625.5h1M546 625.5h1M559 625.5h1M571 625.5h1M584 625.5h1M608 625.5h1M621 625.5h1M633 625.5h1M645 625.5h1M670 625.5h1M682 625.5h1M695 625.5h1M707 625.5h1M732 625.5h1M744 625.5h1M757 625.5h1M769 625.5h1M794 625.5h1M806 625.5h1M819 625.5h1M831 625.5h1M856 625.5h1M868 625.5h1M880 625.5h1M893 625.5h1M917 625.5h1M930 625.5h1M942 625.5h1M955 625.5h1M2 650.5h1M15 650.5h1M27 650.5h1M52 650.5h1M64 650.5h1M76 650.5h1M89 650.5h1M114 650.5h1M126 650.5h1M138 650.5h1M151 650.5h1M175 650.5h1M188 650.5h1M200 650.5h1M213 650.5h1M237 650.5h1M250 650.5h1M262 650.5h1M274 650.5h1M299 650.5h1M311 650.5h1M324 650.5h1M336 650.5h1M361 650.5h1M373 650.5h1M386 650.5h1M398 650.5h1M423 650.5h1M435 650.5h1M447 650.5h1M460 650.5h1M485 650.5h1M497 650.5h1M509 650.5h1M522 650.5h1M546 650.5h1M559 650.5h1M571 650.5h1M584 650.5h1M608 650.5h1M621 650.5h1M633 650.5h1M645 650.5h1M670 650.5h1M682 650.5h1M695 650.5h1M707 650.5h1M732 650.5h1M744 650.5h1M757 650.5h1M769 650.5h1M794 650.5h1M806 650.5h1M819 650.5h1M831 650.5h1M856 650.5h1M868 650.5h1M880 650.5h1M893 650.5h1M917 650.5h1M930 650.5h1M942 650.5h1M955 650.5h1M2 662.5h1M15 662.5h1M27 662.5h1M52 662.5h1M64 662.5h1M76 662.5h1M89 662.5h1M114 662.5h1M126 662.5h1M138 662.5h1M151 662.5h1M175 662.5h1M188 662.5h1M200 662.5h1M213 662.5h1M237 662.5h1M250 662.5h1M262 662.5h1M274 662.5h1M299 662.5h1M311 662.5h1M324 662.5h1M336 662.5h1M361 662.5h1M373 662.5h1M386 662.5h1M398 662.5h1M423 662.5h1M435 662.5h1M447 662.5h1M460 662.5h1M485 662.5h1M497 662.5h1M509 662.5h1M522 662.5h1M546 662.5h1M559 662.5h1M571 662.5h1M584 662.5h1M608 662.5h1M621 662.5h1M633 662.5h1M645 662.5h1M670 662.5h1M682 662.5h1M695 662.5h1M707 662.5h1M732 662.5h1M744 662.5h1M757 662.5h1M769 662.5h1M794 662.5h1M806 662.5h1M819 662.5h1M831 662.5h1M856 662.5h1M868 662.5h1M880 662.5h1M893 662.5h1M917 662.5h1M930 662.5h1M942 662.5h1M955 662.5h1M2 675.5h1M15 675.5h1M27 675.5h1M52 675.5h1M64 675.5h1M76 675.5h1M89 675.5h1M114 675.5h1M126 675.5h1M138 675.5h1M151 675.5h1M175 675.5h1M188 675.5h1M200 675.5h1M213 675.5h1M237 675.5h1M250 675.5h1M262 675.5h1M274 675.5h1M299 675.5h1M311 675.5h1M324 675.5h1M336 675.5h1M361 675.5h1M373 675.5h1M386 675.5h1M398 675.5h1M423 675.5h1M435 675.5h1M447 675.5h1M460 675.5h1M485 675.5h1M497 675.5h1M509 675.5h1M522 675.5h1M546 675.5h1M559 675.5h1M571 675.5h1M584 675.5h1M608 675.5h1M621 675.5h1M633 675.5h1M645 675.5h1M670 675.5h1M682 675.5h1M695 675.5h1M707 675.5h1M732 675.5h1M744 675.5h1M757 675.5h1M769 675.5h1M794 675.5h1M806 675.5h1M819 675.5h1M831 675.5h1M856 675.5h1M868 675.5h1M880 675.5h1M893 675.5h1M917 675.5h1M930 675.5h1M942 675.5h1M955 675.5h1M2 687.5h1M15 687.5h1M27 687.5h1M52 687.5h1M64 687.5h1M76 687.5h1M89 687.5h1M114 687.5h1M126 687.5h1M138 687.5h1M151 687.5h1M175 687.5h1M188 687.5h1M200 687.5h1M213 687.5h1M237 687.5h1M250 687.5h1M262 687.5h1M274 687.5h1M299 687.5h1M311 687.5h1M324 687.5h1M336 687.5h1M361 687.5h1M373 687.5h1M386 687.5h1M398 687.5h1M423 687.5h1M435 687.5h1M447 687.5h1M460 687.5h1M485 687.5h1M497 687.5h1M509 687.5h1M522 687.5h1M546 687.5h1M559 687.5h1M571 687.5h1M584 687.5h1M608 687.5h1M621 687.5h1M633 687.5h1M645 687.5h1M670 687.5h1M682 687.5h1M695 687.5h1M707 687.5h1M732 687.5h1M744 687.5h1M757 687.5h1M769 687.5h1M794 687.5h1M806 687.5h1M819 687.5h1M831 687.5h1M856 687.5h1M868 687.5h1M880 687.5h1M893 687.5h1M917 687.5h1M930 687.5h1M942 687.5h1M955 687.5h1M2 712.5h1M15 712.5h1M27 712.5h1M52 712.5h1M64 712.5h1M76 712.5h1M89 712.5h1M114 712.5h1M126 712.5h1M138 712.5h1M151 712.5h1M175 712.5h1M188 712.5h1M200 712.5h1M213 712.5h1M237 712.5h1M250 712.5h1M262 712.5h1M274 712.5h1M299 712.5h1M311 712.5h1M324 712.5h1M336 712.5h1M361 712.5h1M373 712.5h1M386 712.5h1M398 712.5h1M423 712.5h1M435 712.5h1M447 712.5h1M460 712.5h1M485 712.5h1M497 712.5h1M509 712.5h1M522 712.5h1M546 712.5h1M559 712.5h1M571 712.5h1M584 712.5h1M608 712.5h1M621 712.5h1M633 712.5h1M645 712.5h1M670 712.5h1M682 712.5h1M695 712.5h1M707 712.5h1M732 712.5h1M744 712.5h1M757 712.5h1M769 712.5h1M794 712.5h1M806 712.5h1M819 712.5h1M831 712.5h1M856 712.5h1M868 712.5h1M880 712.5h1M893 712.5h1M917 712.5h1M930 712.5h1M942 712.5h1M955 712.5h1M2 724.5h1M15 724.5h1M27 724.5h1M52 724.5h1M64 724.5h1M76 724.5h1M89 724.5h1M114 724.5h1M126 724.5h1M138 724.5h1M151 724.5h1M175 724.5h1M188 724.5h1M200 724.5h1M213 724.5h1M237 724.5h1M250 724.5h1M262 724.5h1M274 724.5h1M299 724.5h1M311 724.5h1M324 724.5h1M336 724.5h1M361 724.5h1M373 724.5h1M386 724.5h1M398 724.5h1M423 724.5h1M435 724.5h1M447 724.5h1M460 724.5h1M485 724.5h1M497 724.5h1M509 724.5h1M522 724.5h1M546 724.5h1M559 724.5h1M571 724.5h1M584 724.5h1M608 724.5h1M621 724.5h1M633 724.5h1M645 724.5h1M670 724.5h1M682 724.5h1M695 724.5h1M707 724.5h1M732 724.5h1M744 724.5h1M757 724.5h1M769 724.5h1M794 724.5h1M806 724.5h1M819 724.5h1M831 724.5h1M856 724.5h1M868 724.5h1M880 724.5h1M893 724.5h1M917 724.5h1M930 724.5h1M942 724.5h1M955 724.5h1M2 736.5h1M15 736.5h1M27 736.5h1M52 736.5h1M64 736.5h1M76 736.5h1M89 736.5h1M114 736.5h1M126 736.5h1M138 736.5h1M151 736.5h1M175 736.5h1M188 736.5h1M200 736.5h1M213 736.5h1M237 736.5h1M250 736.5h1M262 736.5h1M274 736.5h1M299 736.5h1M311 736.5h1M324 736.5h1M336 736.5h1M361 736.5h1M373 736.5h1M386 736.5h1M398 736.5h1M423 736.5h1M435 736.5h1M447 736.5h1M460 736.5h1M485 736.5h1M497 736.5h1M509 736.5h1M522 736.5h1M546 736.5h1M559 736.5h1M571 736.5h1M584 736.5h1M608 736.5h1M621 736.5h1M633 736.5h1M645 736.5h1M670 736.5h1M682 736.5h1M695 736.5h1M707 736.5h1M732 736.5h1M744 736.5h1M757 736.5h1M769 736.5h1M794 736.5h1M806 736.5h1M819 736.5h1M831 736.5h1M856 736.5h1M868 736.5h1M880 736.5h1M893 736.5h1M917 736.5h1M930 736.5h1M942 736.5h1M955 736.5h1M2 749.5h1M15 749.5h1M27 749.5h1M52 749.5h1M64 749.5h1M76 749.5h1M89 749.5h1M114 749.5h1M126 749.5h1M138 749.5h1M151 749.5h1M175 749.5h1M188 749.5h1M200 749.5h1M213 749.5h1M237 749.5h1M250 749.5h1M262 749.5h1M274 749.5h1M299 749.5h1M311 749.5h1M324 749.5h1M336 749.5h1M361 749.5h1M373 749.5h1M386 749.5h1M398 749.5h1M423 749.5h1M435 749.5h1M447 749.5h1M460 749.5h1M485 749.5h1M497 749.5h1M509 749.5h1M522 749.5h1M546 749.5h1M559 749.5h1M571 749.5h1M584 749.5h1M608 749.5h1M621 749.5h1M633 749.5h1M645 749.5h1M670 749.5h1M682 749.5h1M695 749.5h1M707 749.5h1M732 749.5h1M744 749.5h1M757 749.5h1M769 749.5h1M794 749.5h1M806 749.5h1M819 749.5h1M831 749.5h1M856 749.5h1M868 749.5h1M880 749.5h1M893 749.5h1M917 749.5h1M930 749.5h1M942 749.5h1M955 749.5h1M2 774.5h1M15 774.5h1M27 774.5h1M52 774.5h1M64 774.5h1M76 774.5h1M89 774.5h1M114 774.5h1M126 774.5h1M138 774.5h1M151 774.5h1M175 774.5h1M188 774.5h1M200 774.5h1M213 774.5h1M237 774.5h1M250 774.5h1M262 774.5h1M274 774.5h1M299 774.5h1M311 774.5h1M324 774.5h1M336 774.5h1M361 774.5h1M373 774.5h1M386 774.5h1M398 774.5h1M423 774.5h1M435 774.5h1M447 774.5h1M460 774.5h1M485 774.5h1M497 774.5h1M509 774.5h1M522 774.5h1M546 774.5h1M559 774.5h1M571 774.5h1M584 774.5h1M608 774.5h1M621 774.5h1M633 774.5h1M645 774.5h1M670 774.5h1M682 774.5h1M695 774.5h1M707 774.5h1M732 774.5h1M744 774.5h1M757 774.5h1M769 774.5h1M794 774.5h1M806 774.5h1M819 774.5h1M831 774.5h1M856 774.5h1M868 774.5h1M880 774.5h1M893 774.5h1M917 774.5h1M930 774.5h1M942 774.5h1M955 774.5h1" stroke="#3e3e3e" stroke-width="1"/><path d="M39.5 103V783M101.5 103V783M163.5 103V783M225.5 103V783M287.5 103V783M349.5 103V783M410.5 103V783M472.5 103V783M534.5 103V783M596.5 103V783M658.5 103V783M720.5 103V783M781.5 103V783M843.5 103V783M905.5 103V783M1 143.5H966M1 205.5H966M1 266.5H966M1 328.5H966M1 390.5H966M1 452.5H966M1 514.5H966M1 576.5H966M1 638.5H966M1 699.5H966M1 761.5H966" stroke="#38383a" stroke-width="1"/><path d="M39 143.5h1M39 205.5h1M39 266.5h1M39 328.5h1M39 390.5h1M39 452.5h1M39 514.5h1M39 576.5h1M39 638.5h1M39 699.5h1M39 761.5h1M101 143.5h1M101 205.5h1M101 266.5h1M101 328.5h1M101 390.5h1M101 452.5h1M101 514.5h1M101 576.5h1M101 638.5h1M101 699.5h1M101 761.5h1M163 143.5h1M163 205.5h1M163 266.5h1M163 328.5h1M163 390.5h1M163 452.5h1M163 514.5h1M163 576.5h1M163 638.5h1M163 699.5h1M163 761.5h1M225 143.5h1M225 205.5h1M225 266.5h1M225 328.5h1M225 390.5h1M225 452.5h1M225 514.5h1M225 576.5h1M225 638.5h1M225 699.5h1M225 761.5h1M287 143.5h1M287 205.5h1M287 266.5h1M287 328.5h1M287 390.5h1M287 452.5h1M287 514.5h1M287 576.5h1M287 638.5h1M287 699.5h1M287 761.5h1M349 143.5h1M349 205.5h1M349 266.5h1M349 328.5h1M349 390.5h1M349 452.5h1M349 514.5h1M349 576.5h1M349 638.5h1M349 699.5h1M349 761.5h1M410 143.5h1M410 205.5h1M410 266.5h1M410 328.5h1M410 390.5h1M410 452.5h1M410 514.5h1M410 576.5h1M410 638.5h1M410 699.5h1M410 761.5h1M472 143.5h1M472 205.5h1M472 266.5h1M472 328.5h1M472 390.5h1M472 452.5h1M472 514.5h1M472 576.5h1M472 638.5h1M472 699.5h1M472 761.5h1M534 143.5h1M534 205.5h1M534 266.5h1M534 328.5h1M534 390.5h1M534 452.5h1M534 514.5h1M534 576.5h1M534 638.5h1M534 699.5h1M534 761.5h1M596 143.5h1M596 205.5h1M596 266.5h1M596 328.5h1M596 390.5h1M596 452.5h1M596 514.5h1M596 576.5h1M596 638.5h1M596 699.5h1M596 761.5h1M658 143.5h1M658 205.5h1M658 266.5h1M658 328.5h1M658 390.5h1M658 452.5h1M658 514.5h1M658 576.5h1M658 638.5h1M658 699.5h1M658 761.5h1M720 143.5h1M720 205.5h1M720 266.5h1M720 328.5h1M720 390.5h1M720 452.5h1M720 514.5h1M720 576.5h1M720 638.5h1M720 699.5h1M720 761.5h1M781 143.5h1M781 205.5h1M781 266.5h1M781 328.5h1M781 390.5h1M781 452.5h1M781 514.5h1M781 576.5h1M781 638.5h1M781 699.5h1M781 761.5h1M843 143.5h1M843 205.5h1M843 266.5h1M843 328.5h1M843 390.5h1M843 452.5h1M843 514.5h1M843 576.5h1M843 638.5h1M843 699.5h1M843 761.5h1M905 143.5h1M905 205.5h1M905 266.5h1M905 328.5h1M905 390.5h1M905 452.5h1M905 514.5h1M905 576.5h1M905 638.5h1M905 699.5h1M905 761.5h1" stroke="#2c2c64" stroke-width="1"/></svg></div>
<!-- icons -->
<svg class="a" style="left:0;top:0" width="967" height="103">

<!-- grips -->
<rect x="197" y="47" width="1" height="22" fill="#222"/>
<g transform="translate(200 47)"><g fill="#111"><rect x="2" y="3" width="1.3" height="1.3"/><rect x="4" y="3" width="1.3" height="1.3"/><rect x="2" y="5" width="1.3" height="1.3"/><rect x="4" y="5" width="1.3" height="1.3"/><rect x="2" y="7" width="1.3" height="1.3"/><rect x="4" y="7" width="1.3" height="1.3"/><rect x="2" y="9" width="1.3" height="1.3"/><rect x="4" y="9" width="1.3" height="1.3"/><rect x="2" y="11" width="1.3" height="1.3"/><rect x="4" y="11" width="1.3" height="1.3"/><rect x="2" y="13" width="1.3" height="1.3"/><rect x="4" y="13" width="1.3" height="1.3"/><rect x="2" y="15" width="1.3" height="1.3"/><rect x="4" y="15" width="1.3" height="1.3"/></g><g fill="#a8a8a8"><rect x="6" y="3" width="1" height="1"/><rect x="6" y="5" width="1" height="1"/><rect x="6" y="7" width="1" height="1"/><rect x="6" y="9" width="1" height="1"/><rect x="6" y="11" width="1" height="1"/><rect x="6" y="13" width="1" height="1"/><rect x="6" y="15" width="1" height="1"/></g></g>
<rect x="797" y="47" width="2" height="22" fill="#3a3a3a"/>
<g transform="translate(800 47)"><g fill="#111"><rect x="2" y="3" width="1.3" height="1.3"/><rect x="4" y="3" width="1.3" height="1.3"/><rect x="2" y="5" width="1.3" height="1.3"/><rect x="4" y="5" width="1.3" height="1.3"/><rect x="2" y="7" width="1.3" height="1.3"/><rect x="4" y="7" width="1.3" height="1.3"/><rect x="2" y="9" width="1.3" height="1.3"/><rect x="4" y="9" width="1.3" height="1.3"/><rect x="2" y="11" width="1.3" height="1.3"/><rect x="4" y="11" width="1.3" height="1.3"/><rect x="2" y="13" width="1.3" height="1.3"/><rect x="4" y="13" width="1.3" height="1.3"/><rect x="2" y="15" width="1.3" height="1.3"/><rect x="4" y="15" width="1.3" height="1.3"/></g><g fill="#a8a8a8"><rect x="6" y="3" width="1" height="1"/><rect x="6" y="5" width="1" height="1"/><rect x="6" y="7" width="1" height="1"/><rect x="6" y="9" width="1" height="1"/><rect x="6" y="11" width="1" height="1"/><rect x="6" y="13" width="1" height="1"/><rect x="6" y="15" width="1" height="1"/></g></g>
<rect x="183" y="74" width="2" height="22" fill="#3a3a3a"/>
<g transform="translate(185 74)"><g fill="#111"><rect x="2" y="3" width="1.3" height="1.3"/><rect x="4" y="3" width="1.3" height="1.3"/><rect x="2" y="5" width="1.3" height="1.3"/><rect x="4" y="5" width="1.3" height="1.3"/><rect x="2" y="7" width="1.3" height="1.3"/><rect x="4" y="7" width="1.3" height="1.3"/><rect x="2" y="9" width="1.3" height="1.3"/><rect x="4" y="9" width="1.3" height="1.3"/><rect x="2" y="11" width="1.3" height="1.3"/><rect x="4" y="11" width="1.3" height="1.3"/><rect x="2" y="13" width="1.3" height="1.3"/><rect x="4" y="13" width="1.3" height="1.3"/><rect x="2" y="15" width="1.3" height="1.3"/><rect x="4" y="15" width="1.3" height="1.3"/></g><g fill="#a8a8a8"><rect x="6" y="3" width="1" height="1"/><rect x="6" y="5" width="1" height="1"/><rect x="6" y="7" width="1" height="1"/><rect x="6" y="9" width="1" height="1"/><rect x="6" y="11" width="1" height="1"/><rect x="6" y="13" width="1" height="1"/><rect x="6" y="15" width="1" height="1"/></g></g>
<rect x="766" y="74" width="2" height="22" fill="#3a3a3a"/>
<g transform="translate(769 74)"><g fill="#111"><rect x="2" y="3" width="1.3" height="1.3"/><rect x="4" y="3" width="1.3" height="1.3"/><rect x="2" y="5" width="1.3" height="1.3"/><rect x="4" y="5" width="1.3" height="1.3"/><rect x="2" y="7" width="1.3" height="1.3"/><rect x="4" y="7" width="1.3" height="1.3"/><rect x="2" y="9" width="1.3" height="1.3"/><rect x="4" y="9" width="1.3" height="1.3"/><rect x="2" y="11" width="1.3" height="1.3"/><rect x="4" y="11" width="1.3" height="1.3"/><rect x="2" y="13" width="1.3" height="1.3"/><rect x="4" y="13" width="1.3" height="1.3"/><rect x="2" y="15" width="1.3" height="1.3"/><rect x="4" y="15" width="1.3" height="1.3"/></g><g fill="#a8a8a8"><rect x="6" y="3" width="1" height="1"/><rect x="6" y="5" width="1" height="1"/><rect x="6" y="7" width="1" height="1"/><rect x="6" y="9" width="1" height="1"/><rect x="6" y="11" width="1" height="1"/><rect x="6" y="13" width="1" height="1"/><rect x="6" y="15" width="1" height="1"/></g></g>

<!-- row1 left icons -->
<g stroke-linejoin="round">
<path d="M5.5 54.5L9.5 50.5V52.5H13.5V56.5H9.5V58.5Z" fill="#c8c8e0" stroke="#333" stroke-width="1.1"/>
<circle cx="15.5" cy="60.5" r="3.3" fill="#e8f6fa" stroke="#333" stroke-width="1.3"/>
<path d="M18 63L20.5 65.5" stroke="#333" stroke-width="2"/>
</g>
<rect x="27" y="49" width="1" height="17" fill="#999"/>
<rect x="35.5" y="50.5" width="12" height="15" rx="1" fill="#fff" stroke="#333" stroke-width="1.1"/>
<rect x="37.5" y="52" width="5.5" height="5.5" fill="#2f5f9a" stroke="#1d3e74" stroke-width="0.8"/>
<rect x="44" y="52" width="2" height="5.5" fill="#aaa"/>
<path d="M38 61.5H45.5M38 61.5L40 60M38 61.5L40 63" stroke="#333" stroke-width="1"/>
<rect x="57.5" y="50.5" width="15" height="15" rx="1" fill="#fff" stroke="#333" stroke-width="1.1"/>
<path d="M62.5 50.5V65.5" stroke="#2a7272" stroke-width="1.2"/>
<path d="M59 53.5H61M59 55.5H61M59 58H61M59 60.5H61M59 62.5H61" stroke="#333" stroke-width="0.9"/>
<rect x="64.5" y="52.5" width="2.5" height="2.5" fill="none" stroke="#333" stroke-width="0.9"/>
<rect x="68.5" y="52.5" width="2.5" height="2.5" fill="none" stroke="#333" stroke-width="0.9"/>
<rect x="64.5" y="56" width="2.5" height="2.5" fill="none" stroke="#333" stroke-width="0.9"/>
<rect x="68.5" y="56" width="2.5" height="2.5" fill="none" stroke="#333" stroke-width="0.9"/>
<rect x="65.5" y="60" width="4" height="3" fill="#9c9cd8" stroke="#2a7272" stroke-width="0.9"/>
<rect x="82.5" y="50.5" width="9.5" height="15" rx="1" fill="#fff" stroke="#333" stroke-width="1.1"/>
<rect x="91.5" y="55" width="1.5" height="3" fill="#fff" stroke="#333" stroke-width="0.9"/>
<path d="M84 52.5H90V54.5H84Z" fill="#aaa"/>
<path d="M84.5 56V57.5M86.5 56V57.5M84.5 59.5V61M86.5 59.5V61M84.5 63V64M86.5 63V64" stroke="#999" stroke-width="1.2"/>
<path d="M103.5 55.5H108.5L114 61.5H109Z" fill="#ddd" stroke="#333" stroke-width="0.9"/>
<path d="M104.5 57.5l4 4.5M105 56l4.5 5" stroke="#888" stroke-width="0.7"/>
<path d="M108.5 53.5L110.5 51.5L118.5 59.5L115.5 62.5L108 55Z" fill="#fafafa" stroke="#333" stroke-width="1"/>
<path d="M110 53l7 7" stroke="#bbb" stroke-width="0.8"/>
<circle cx="116.5" cy="60.5" r="1.6" fill="#6ccad8" stroke="#333" stroke-width="0.8"/>
<path d="M103 63.5H116" stroke="#222" stroke-width="1.1"/>
<path d="M126.5 51.5h2.5M130.5 51.5h3M135 51.5h2M139 52.5h2M141.5 54v2.5M141.5 57.5v1M126.5 53v3M126.5 57.5v3M126.5 62v2.5h2.5M130 64.5h2M137 52v2.5l-2 1.5M130 57.5l-2 1.5" stroke="#333" stroke-width="1" fill="none"/>
<rect x="127.5" y="53" width="9" height="3" fill="#cfcfd8"/>
<rect x="136" y="55" width="4" height="3" fill="#c8c8f0"/>
<rect x="133.5" y="58.5" width="8.5" height="7" fill="#fff" stroke="#2a2a7a" stroke-width="1.3"/>
<path d="M135 60.3H140.7" stroke="#9a9ad0" stroke-width="1"/><path d="M135.2 62.7h1.2M137.5 62.7h3.2" stroke="#2a2a7a" stroke-width="0.9"/>
<rect x="151.5" y="51.5" width="10.5" height="13" rx="1" fill="#fff" stroke="#333" stroke-width="1.1"/>
<rect x="153" y="53" width="7.5" height="2" fill="#6a6aa0"/>
<rect x="153" y="55" width="7.5" height="1.2" fill="#d0d0f8"/>
<g fill="#222"><rect x="153" y="57" width="1.5" height="1.5"/><rect x="156" y="57" width="1.5" height="1.5"/><rect x="159" y="57" width="1.5" height="1.5"/><rect x="153" y="59.7" width="1.5" height="1.5"/><rect x="156" y="59.7" width="1.5" height="1.5"/><rect x="159" y="59.7" width="1.5" height="1.5"/><rect x="153" y="62.3" width="1.5" height="1.5"/><rect x="156" y="62.3" width="1.5" height="1.5"/><rect x="159" y="62.3" width="1.5" height="1.5"/></g>
<rect x="171" y="49" width="1" height="17" fill="#999"/>
<rect x="179.5" y="51.5" width="13" height="13" rx="1" fill="#fff" stroke="#1f5a6a" stroke-width="1.1"/>
<rect x="180.5" y="52.5" width="11" height="5" fill="#cfcfcf"/>
<text x="186" y="62" font-family="Liberation Sans" font-weight="bold" font-size="11" text-anchor="middle" fill="#222">?</text>

<!-- row1 second toolbar icons -->
<path d="M211.5 61.5L216 50.5L220.5 61.5M213 57.5H219" fill="none" stroke="#222" stroke-width="1.4"/>
<g transform="translate(214 52)"><path d="M0.5 13.5C3 13 5 10.5 7.5 7L10 9C8 12 5 13.8 0.5 13.5Z" fill="#a9682e" stroke="#7a2e22" stroke-width="0.9"/><path d="M8.5 7.5L12.5 2.5L13.5 4L9.8 8.8" fill="#fff" stroke="#d98a18" stroke-width="1" stroke-dasharray="1 0.8"/><circle cx="12.8" cy="2.8" r="1.2" fill="#d23a12"/></g>
<path d="M360.5 58V64.5M375.5 58V64.5M360.5 61.5H375.5M360.5 61.5l2 -1.5v3zM375.5 61.5l-2 -1.5v3z" stroke="#222" stroke-width="1.1" fill="#222"/>
<g transform="translate(364 47.5)"><path d="M0.5 13.5C3 13 5 10.5 7.5 7L10 9C8 12 5 13.8 0.5 13.5Z" fill="#a9682e" stroke="#7a2e22" stroke-width="0.9"/><path d="M8.5 7.5L12.5 2.5L13.5 4L9.8 8.8" fill="#fff" stroke="#d98a18" stroke-width="1" stroke-dasharray="1 0.8"/><circle cx="12.8" cy="2.8" r="1.2" fill="#d23a12"/></g>
<rect x="509.5" y="51.5" width="12" height="11" rx="1" fill="#fff" stroke="#222" stroke-width="1.1"/>
<rect x="510.5" y="52.5" width="10" height="1.5" fill="#8a86d0"/>
<path d="M514.5 54.5V62M518.5 54.5V62M510.5 57.5H521M510.5 59.7H521" stroke="#ccc" stroke-width="0.8"/>
<g transform="translate(512 55)"><path d="M0.5 13.5C3 13 5 10.5 7.5 7L10 9C8 12 5 13.8 0.5 13.5Z" fill="#a9682e" stroke="#7a2e22" stroke-width="0.9"/><path d="M8.5 7.5L12.5 2.5L13.5 4L9.8 8.8" fill="#fff" stroke="#d98a18" stroke-width="1" stroke-dasharray="1 0.8"/><circle cx="12.8" cy="2.8" r="1.2" fill="#d23a12"/></g>
<path d="M663.5 63.5L667 55L669.5 53.5H672M663.5 63.5L663 59M663.5 63.5L667 61" fill="none" stroke="#222" stroke-width="1.1"/>
<circle cx="669.5" cy="53.5" r="3.2" fill="#e4e4ff" stroke="#333" stroke-width="1.1"/>
<g transform="translate(661 55)"><path d="M0.5 13.5C3 13 5 10.5 7.5 7L10 9C8 12 5 13.8 0.5 13.5Z" fill="#a9682e" stroke="#7a2e22" stroke-width="0.9"/><path d="M8.5 7.5L12.5 2.5L13.5 4L9.8 8.8" fill="#fff" stroke="#d98a18" stroke-width="1" stroke-dasharray="1 0.8"/><circle cx="12.8" cy="2.8" r="1.2" fill="#d23a12"/></g>

<!-- row1 right icons -->
<g stroke-width="1.2">
<ellipse cx="816.5" cy="57.4" rx="5" ry="5.2" fill="#c8d0f4" stroke="#0a64d4"/><ellipse cx="821.5" cy="57.4" rx="5" ry="5.2" fill="#c8d0f4" fill-opacity="0.6" stroke="#0a64d4"/>
<ellipse cx="839.5" cy="57.4" rx="5" ry="5.2" fill="#c8d0f4" stroke="#0a64d4"/><path d="M842 53a5 5.2 0 1 1 0 8.8" fill="none" stroke="#444"/><path d="M842 53a5 5.2 0 0 0 0 8.8" fill="#fff" stroke="#0a64d4"/>
<ellipse cx="862.5" cy="57.4" rx="5" ry="5.2" fill="none" stroke="#444"/><ellipse cx="867.5" cy="57.4" rx="5" ry="5.2" fill="none" stroke="#444"/><ellipse cx="865" cy="57.4" rx="2.3" ry="4.4" fill="#c8d0f4" stroke="#0a64d4"/>
</g>
<rect x="879" y="49" width="1" height="17" fill="#888"/>
<path d="M886.5 54.5L890 50.5H901.5V61L898 65H886.5Z" fill="#a8c8f0" stroke="#333" stroke-width="1"/>
<path d="M886.5 60H898V65M898 54.5V60M886.5 54.5H898L901.5 50.5" fill="none" stroke="#333" stroke-width="1"/>
<rect x="887" y="60.5" width="10.5" height="4" fill="#d8d0f8"/>
<path d="M898.5 60.5L901 58V61L898.5 64Z" fill="#e0e0e0"/>
<path d="M892 59V55.5M890.5 57L892 55.3L893.5 57" stroke="#222" stroke-width="1" fill="none"/>
<path d="M909.5 54.5H916.5M913 51V58" stroke="#111" stroke-width="1"/><path d="M909 54.5l2 -1.6v3.2zM917 54.5l-2 -1.6v3.2zM913 50.5l-1.6 2h3.2zM913 58.5l-1.6 -2h3.2z" fill="#111"/>
<path d="M916.5 60L919 57.5H924V62.5L921.5 65H916.5Z" fill="#d8e8f0" stroke="#333" stroke-width="1"/>
<rect x="916.5" y="60" width="5" height="5" fill="#a8c8f0" stroke="#1a64c8" stroke-width="1"/>
<path d="M932.5 54.5L936 50.5H947.5V60L944 64H932.5Z" fill="#cfe8ec" stroke="#1a64c8" stroke-width="1.1"/>
<rect x="932.5" y="54.5" width="11.5" height="9.5" fill="#fff" stroke="#1a64c8" stroke-width="1.1"/>
<rect x="934.5" y="56" width="8" height="7" fill="#eef8fa" stroke="#333" stroke-width="1.1"/>
<path d="M955 50.5L961 56.5M961 50.5L955 56.5" stroke="#e01818" stroke-width="1.8"/>
<path d="M961.5 60L964 57.5H966V65H961.5Z" fill="#a8c8f0" stroke="#333" stroke-width="1"/>

<!-- row2 left icons -->
<path d="M120.5 83.5H130.5L133.5 80.5H123.5Z" fill="#d8d0f8" stroke="#1a64d4" stroke-width="1.2"/>
<circle cx="126.5" cy="79.5" r="3" fill="#eee" stroke="#666" stroke-width="1.1"/>
<path d="M120.5 86.5H130.5L133.5 83.5M120.5 89.5H130.5L133.5 86.5M120.5 92.5H130.5L133.5 89.5M120.5 86.5L123 84M120.5 89.5L123 87M120.5 92.5L123 90" fill="none" stroke="#222" stroke-width="1.1"/>
<path d="M142 79.5H145L146.5 81M142 79.5l2-1.5v3z" stroke="#111" stroke-width="1.1" fill="#111"/>
<path d="M145.5 85.5H152.5L155.5 82.5H148.5ZM145.5 88.5H152.5L155.5 85.5M145.5 91.5H152.5L155.5 88.5M145.5 88.5L148 86M145.5 91.5L148 89" fill="none" stroke="#222" stroke-width="1"/>
<path d="M145.5 88.5H152.5M145.5 91.5H152.5" stroke="#2a2a8a" stroke-width="1.1"/>
<path d="M165.5 81.5H172.5L175.5 78.5H168.5ZM165.5 84.5H172.5L175.5 81.5M165.5 87.5H170M165.5 84.5L168 82M165.5 87.5L168 85" fill="none" stroke="#222" stroke-width="1"/>
<rect x="170.5" y="85.5" width="8.5" height="7.5" fill="#fff" stroke="#2a2a7a" stroke-width="1.3"/>
<path d="M172 88.5H177.5M172.5 90.8h1M174.5 90.8h3" stroke="#2a2a7a" stroke-width="1"/>

<!-- row2 right icons -->
<g transform="translate(779.5 76) scale(1.3 1)"><path d="M3.5 10.5L1.5 8.3C0.7 7.3 1.9 6.1 2.9 7L4.3 8.4V3.2C4.3 2.2 5.9 2.2 5.9 3.2V1.9C5.9 0.9 7.6 0.9 7.6 1.9V2.5C7.6 1.5 9.3 1.5 9.3 2.5V4C9.3 3 11 3 11 4V10C11 13.3 9.3 15.3 6.8 15.3C5 15.3 4.2 12.2 3.5 10.5Z" fill="#fff" stroke="#222" stroke-width="1" vector-effect="non-scaling-stroke"/><path d="M5.9 3V8.5M7.6 2.3V8.5M9.3 3V8.5" stroke="#222" stroke-width="0.9" vector-effect="non-scaling-stroke"/></g>
<circle cx="809" cy="82" r="5.2" fill="#e6f8fc" stroke="#333" stroke-width="1.6"/>
<path d="M812.8 85.8L818 91" stroke="#333" stroke-width="2.6"/>
<path d="M834 92V79M831.5 81.5L834 78.5L836.5 81.5Z" stroke="#222" stroke-width="1.2" fill="#fff"/>
<ellipse cx="834" cy="87" rx="6.5" ry="2.5" fill="none" stroke="#2a2a8a" stroke-width="1.1"/>
<path d="M827.5 88.5l2 -1v2z" fill="#222"/>
<path d="M839 93L842 90V93Z" fill="#111"/>
<rect x="849.5" y="80" width="11" height="7.5" fill="#fff" stroke="#2a2a8a" stroke-width="1.2"/>
<rect x="851.5" y="78.5" width="4" height="2" fill="#2a2a8a"/>
<circle cx="855.5" cy="84" r="2.3" fill="#ddd" stroke="#333" stroke-width="1"/>
<path d="M859.5 88l2 1.5" stroke="#222" stroke-width="1"/>
<path d="M862 93L865 90V93Z" fill="#111"/>
<ellipse cx="876" cy="84.5" rx="2.3" ry="4.3" fill="#3a3a8a"/><path d="M873.7 84.5a2.3 4.3 0 0 1 4.6 0z" fill="#2e7a80"/><rect x="874.5" y="90" width="3" height="2.5" fill="#333"/>
<ellipse cx="883.5" cy="82" rx="2.3" ry="4.3" fill="#3a3a8a"/><path d="M881.2 82a2.3 4.3 0 0 1 4.6 0z" fill="#2e7a80"/><rect x="882" y="87.5" width="3" height="2.5" fill="#333"/>
<path d="M879 93L882 90V93Z" fill="#111"/><path d="M886 93L889 90V93Z" fill="#111"/>
</svg>
<!-- command line -->
<div class="a" style="left:1px;top:783px;width:965px;height:19px;background:#fff"></div>
<div class="a" style="left:1px;top:783px;width:800px;height:1px;background:#444"></div>
<div class="a" style="left:803px;top:784px;width:6px;height:17px;background:#c8c8c8"></div>
<svg class="a" style="left:812px;top:784px" width="16" height="17"><path d="M10.5 5.5L5.8 8.7L10.5 11.8" fill="none" stroke="#444" stroke-width="1.8"/></svg>
<div class="a" style="left:1px;top:802px;width:965px;height:1px;background:#aaa"></div>
<div class="a" style="left:1px;top:803px;width:965px;height:1px;background:#fff"></div>
<div class="a" style="left:1px;top:804px;width:965px;height:5px;background:#6e6e6e"></div>
<div class="a" style="left:1px;top:809px;width:965px;height:49px;background:#cdcdcd"></div>
<div class="a" style="left:13px;top:856px;width:2px;height:2px;background:#333"></div>
<div class="a" style="left:42px;top:856px;width:2px;height:2px;background:#333"></div>
<div class="a" style="left:54px;top:857px;width:4px;height:1px;background:#222"></div>
<div class="a" style="left:0;top:858px;width:967px;height:1px;background:#000"></div>
<!-- dialog -->
<div class="a" style="left:235px;top:252px;width:553px;height:504px;background:#fff;border:1px solid #2e2e2e"></div>
<div class="t" style="left:239px;top:260px;color:#999;font-size:15px">欧美体系法兰: <span style="letter-spacing:0.55px">HG20592-2009&nbsp;&nbsp;HG20615-2009</span></div>
<svg class="a" style="left:758px;top:260px" width="16" height="16"><path d="M2.5 2.5L13.5 13.5M13.5 2.5L2.5 13.5" stroke="#777" stroke-width="1.1"/></svg>

<div class="grp" style="left:244px;top:294px;width:535px;height:419px"></div>
<div class="lbl" style="left:252px;top:285px">选择项</div>

<div class="radio" style="left:309px;top:314px"></div>
<div class="t" style="left:329px;top:314px">欧标法兰</div>
<div class="radio on" style="left:463px;top:314px"></div>
<div class="t" style="left:484px;top:314px">美标法兰</div>

<div class="chk on" style="left:278px;top:338px"></div>
<div class="t" style="left:299px;top:338px">主视</div>
<div class="chk on" style="left:363px;top:338px"></div>
<div class="t" style="left:384px;top:338px">俯视</div>
<div class="chk" style="left:448px;top:338px"></div>
<div class="t" style="left:469px;top:338px">剖视</div>
<div class="chk on" style="left:533px;top:338px"></div>
<div class="t" style="left:554px;top:338px">详图</div>

<div class="dcmb" style="left:253px;top:364px;width:357px;height:23px"></div>
<div class="t" style="left:257px;top:367px">带颈对焊钢制管法兰<span class="ss"><b class="c">(</b><b class="c w2">W</b><b class="c w1">N</b><b class="c">)</b></span></div>
<div class="chev" style="left:595.5px;top:369px;border-color:#333"></div>

<div class="dcmb" style="left:253px;top:393px;width:164px;height:23px"></div>
<div class="t" style="left:257px;top:396px">实面</div>
<div class="t ss" style="left:318px;top:398px"><b class="c w1">R</b><b class="c w1">F</b></div>
<div class="chev" style="left:402.5px;top:398px;border-color:#333"></div>

<div class="dcmb" style="left:425px;top:393px;width:185px;height:23px"></div>
<div class="t" style="left:429px;top:398px;color:#222;font-size:13.5px">300</div>
<div class="chev" style="left:595.5px;top:398px;border-color:#333"></div>

<div class="a" style="left:253px;top:422px;width:142px;height:23px;background:#cccccc"></div>
<div class="chev" style="left:380.5px;top:427px;border-color:#b8b8b8"></div>
<div class="t" style="left:412px;top:425px">钢管壁厚<span style="margin-left:2px">:</span></div>
<div class="tb" style="left:496px;top:422px;width:113px;height:22px"></div>
<div class="t" style="left:498px;top:426px;color:#111;font-size:13.5px">8</div>

<div class="grp" style="left:249px;top:467px;width:365px;height:37px"></div>
<div class="lbl" style="left:258px;top:459px">在选择完法兰参数后，与法兰相连的是<span style="margin-left:2px">:</span></div>
<div class="radio on" style="left:335px;top:484px"></div>
<div class="t" style="left:356px;top:484px">接管</div>
<div class="radio" style="left:476px;top:484px"></div>
<div class="t" style="left:496px;top:484px">锻管</div>

<div class="t" style="left:262px;top:515px">接管长度<span style="margin-left:2px">:</span></div>
<div class="tb" style="left:346px;top:512px;width:112px;height:22px"></div>
<div class="t ss" style="left:347px;top:515px"><b class="c">0</b></div>
<div class="btn" style="left:467px;top:509px;width:141px;height:24px">计算管长</div>

<div class="t" style="left:262px;top:545px">法兰材料<span style="margin-left:2px">:</span></div>
<div class="tb" style="left:346px;top:542px;width:81px;height:22px"></div>
<div class="t ss" style="left:348px;top:545px"><b class="c">1</b><b class="c">6</b><b class="c w2">M</b><b class="c w3">n</b><span style="display:inline-block;width:4px"></span><span style="letter-spacing:-1.8px;font-size:16px;position:relative;top:-2px">II</span></div>
<div class="t" style="left:444px;top:545px">接管材料<span style="margin-left:2px">:</span></div>
<div class="tb" style="left:528px;top:542px;width:81px;height:22px"></div>
<div class="t" style="left:530px;top:545px;color:#111;font-size:13.5px">20</div>

<div class="grp" style="left:249px;top:601px;width:365px;height:37px"></div>
<div class="lbl" style="left:258px;top:593px">在选择完法兰参数后，是否有配对法兰(盖)<span style="margin-left:2px">:</span></div>
<div class="radio on" style="left:322px;top:618px"></div>
<div class="t" style="left:343px;top:618px">无配对</div>
<div class="radio" style="left:469px;top:618px"></div>
<div class="t" style="left:490px;top:618px">有配对</div>

<div class="grp" style="left:249px;top:660px;width:365px;height:37px"></div>
<div class="lbl" style="left:257px;top:652px">管口明细表即时生成<span style="margin-left:2px">:</span></div>
<div class="chk on" style="left:254px;top:675px"></div>
<div class="t" style="left:275px;top:675px">是否生成明细表</div>
<div class="lbl" style="left:432px;top:679px;padding:0 2px 2px 2px">管口符号</div>
<div class="tb" style="left:518px;top:676px;width:91px;height:22px"></div>
<div class="t ss" style="left:519px;top:679px"><b class="c w1">N</b><b class="c">1</b></div>

<!-- list 1 -->
<div class="lst" style="left:634px;top:310px;width:136px;height:152px">
<div class="li" style="top:2px"><b class="c w1">D</b><b class="c w1">N</b><b class="c"> </b><b class="c">1</b><b class="c">5</b></div>
<div class="li" style="top:17px"><b class="c w1">D</b><b class="c w1">N</b><b class="c"> </b><b class="c">2</b><b class="c">0</b></div>
<div class="li" style="top:32px"><b class="c w1">D</b><b class="c w1">N</b><b class="c"> </b><b class="c">2</b><b class="c">5</b></div>
<div class="li" style="top:47px"><b class="c w1">D</b><b class="c w1">N</b><b class="c"> </b><b class="c">3</b><b class="c">2</b></div>
<div class="li" style="top:61px"><b class="c w1">D</b><b class="c w1">N</b><b class="c"> </b><b class="c">4</b><b class="c">0</b></div>
<div class="li" style="top:76px"><b class="c w1">D</b><b class="c w1">N</b><b class="c"> </b><b class="c">5</b><b class="c">0</b></div>
<div class="li" style="top:91px"><b class="c w1">D</b><b class="c w1">N</b><b class="c"> </b><b class="c">6</b><b class="c">5</b></div>
<div class="li" style="top:106px"><b class="c w1">D</b><b class="c w1">N</b><b class="c"> </b><b class="c">8</b><b class="c">0</b></div>
<div class="a" style="left:0px;top:120px;width:113px;height:15px;background:#3399ff"></div>
<div class="li" style="top:121px;color:#fff"><b class="c w1">D</b><b class="c w1">N</b><b class="c"> </b><b class="c">1</b><b class="c">0</b><b class="c">0</b></div>
<div class="li" style="top:136px"><b class="c w1">D</b><b class="c w1">N</b><b class="c"> </b><b class="c">1</b><b class="c">2</b><b class="c">5</b></div>
<div class="a" style="left:114px;top:21px;width:19px;height:57px;background:#c8c8c8"></div>
<svg class="a" style="left:115px;top:0" width="19" height="150"><path d="M5 12.5L9.5 8L14 12.5M5 137L9.5 141.5L14 137" fill="none" stroke="#555" stroke-width="1.6"/></svg>
</div>

<!-- list 2 -->
<div class="lst" style="left:634px;top:475px;width:136px;height:227px">
<div class="li" style="top:2px"><b class="c w1">A</b><b class="c">1</b></div><div class="li" style="top:2px;left:56px"><b class="c">1</b><b class="c">1</b><b class="c">4</b><b class="c">.</b><b class="c">3</b></div>
<div class="li" style="top:17px"><b class="c w1">D</b></div><div class="li" style="top:17px;left:56px"><b class="c">2</b><b class="c">5</b><b class="c">5</b></div>
<div class="li" style="top:32px"><b class="c w1">K</b></div><div class="li" style="top:32px;left:56px"><b class="c">2</b><b class="c">0</b><b class="c">0</b></div>
<div class="li" style="top:47px"><b class="c w1">L</b></div><div class="li" style="top:47px;left:56px"><b class="c">2</b><b class="c">2</b></div>
<div class="li" style="top:62px"><b class="c w3">n</b></div><div class="li" style="top:62px;left:56px"><b class="c">8</b></div>
<div class="li" style="top:77px"><b class="c w1">T</b><b class="c w3">h</b></div><div class="li" style="top:77px;left:56px"><b class="c w2">M</b><b class="c">2</b><b class="c">0</b></div>
<div class="li" style="top:91px"><b class="c w1">C</b></div><div class="li" style="top:91px;left:56px"><b class="c">3</b><b class="c">0</b><b class="c">.</b><b class="c">2</b></div>
<div class="li" style="top:106px"><b class="c w1">N</b></div><div class="li" style="top:106px;left:56px"><b class="c">1</b><b class="c">4</b><b class="c">6</b></div>
<div class="li" style="top:121px"><b class="c w1">H</b><b class="c">1</b></div><div class="li" style="top:121px;left:56px"><b class="c">1</b><b class="c">0</b></div>
<div class="li" style="top:136px"><b class="c w1">R</b><b class="c">2</b></div><div class="li" style="top:136px;left:56px"><b class="c">5</b><b class="c">.</b><b class="c">5</b></div>
<div class="li" style="top:151px"><b class="c w1">H</b></div><div class="li" style="top:151px;left:56px"><b class="c">8</b><b class="c">4</b></div>
<div class="li" style="top:166px"><b class="c w3">k</b><b class="c w3">g</b></div><div class="li" style="top:166px;left:56px"><b class="c">1</b><b class="c">2</b><b class="c">.</b><b class="c">0</b><b class="c">3</b></div>
<div class="li" style="top:181px"><b class="c w3">d</b></div><div class="li" style="top:181px;left:56px"><b class="c">1</b><b class="c">5</b><b class="c">7</b><b class="c">.</b><b class="c">2</b></div>
<div class="li" style="top:196px"><b class="c w3">f</b><b class="c">1</b></div><div class="li" style="top:196px;left:56px"><b class="c">2</b></div>
<div class="li" style="top:211px"><b class="c w3">f</b><b class="c">2</b></div><div class="li" style="top:211px;left:56px"><b class="c">7</b></div>
</div>

<!-- buttons -->
<div class="btn" style="left:245px;top:722px;width:158px;height:24px;border:2px solid #1a6fd0;line-height:20px">上次数据</div>
<div class="btn" style="left:413px;top:722px;width:158px;height:24px">改变材料</div>
<div class="btn" style="left:581px;top:722px;width:120px;height:24px;background:#ccf8ff;border-color:#5d97d6">确定</div>
<div class="btn" style="left:711px;top:722px;width:66px;height:24px">取消</div>

<!-- cursor -->
<svg class="a" style="left:610px;top:726px" width="30" height="32"><path d="M6.5 4.5V24.5L11.2 19.8L15 27.5L17.5 26.3L14 18.5H20.5Z" fill="#fff" stroke="#000" stroke-width="1"/></svg>
</body></html>
